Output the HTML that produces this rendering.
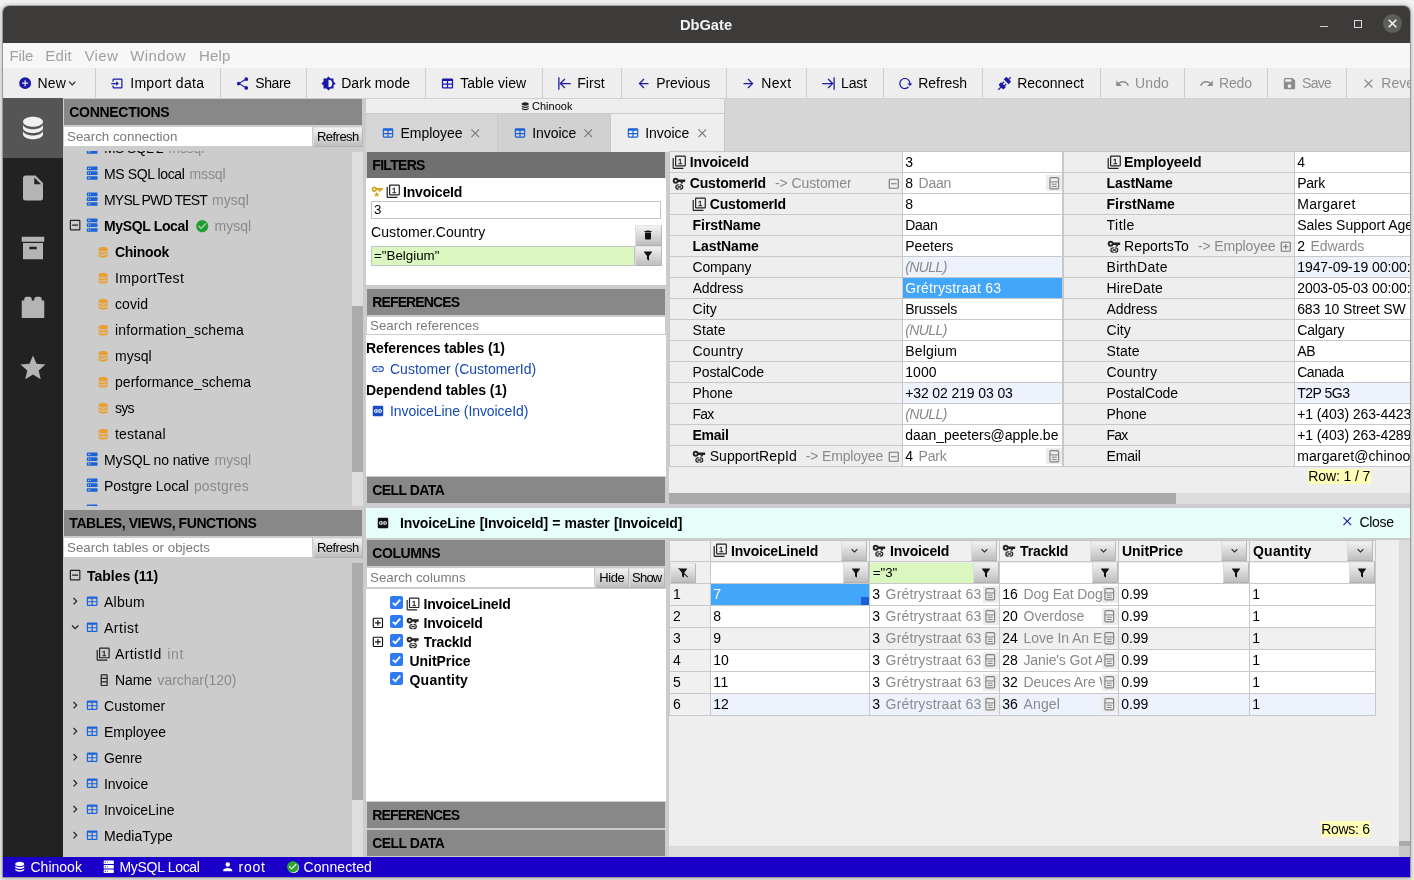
<!DOCTYPE html><html><head><meta charset="utf-8"><title>DbGate</title><style>
html,body{margin:0;padding:0}
body{width:1414px;height:880px;overflow:hidden;background:#f1f1f1;font-family:"Liberation Sans",sans-serif;font-size:14px;color:#000;position:relative}
#sh{position:absolute;left:3px;top:6px;width:1407px;height:871px;border-radius:6px 6px 0 0;box-shadow:0 0 0 1px rgba(0,0,0,.22),0 1px 5px 1px rgba(0,0,0,.3)}
#win{position:absolute;left:0;top:0;width:1414px;height:880px;clip-path:inset(6px 4px 3px 3px round 6px 6px 0 0);background:#eee;will-change:transform}
#win div,#win svg.i{position:absolute;box-sizing:border-box}
svg.i{fill:currentColor}
.t{white-space:pre;overflow:hidden}
.wt{background:#888;padding-left:5.3px;white-space:pre}
.btn{background:linear-gradient(#f2f2f2,#bebebe);border:1px solid;border-color:#e4e4e4 #b8b8b8 #b2b2b2 #dcdcdc;text-align:center;white-space:pre}
.inp{background:#fff;border:1px solid transparent;background-clip:border-box;font-size:13.33px;color:#000;white-space:pre;overflow:hidden}
.ph{color:#7a7a7a}
.clip{overflow:hidden}
.cell{white-space:pre;overflow:hidden;padding-left:2.2px}
</style></head><body>
<div id="sh"></div><div id="win">
<div style="left:0px;top:0px;width:1414px;height:43px;background:#3c3b39"></div>
<div class="t" style="left:606px;top:11.2px;height:28px;line-height:28px;width:200px;text-align:center;color:#f4f4f4"><span style="letter-spacing:-0.003px;font-size:14.67px;font-weight:bold;">DbGate</span></div>
<div style="left:1320px;top:26px;width:8px;height:1px;background:#d0d0d0"></div>
<div style="left:1354px;top:20px;width:8px;height:8px;border:1px solid #d8d8d8"></div>
<div style="left:1382.6px;top:14.3px;width:19px;height:19px;background:#5f5e5c;border-radius:50%"></div>
<svg class="i" style="left:1382.6px;top:14.3px;width:19px;height:19px" viewBox="0 0 19 19"><path d="M5.7 5.7L13.3 13.3M13.3 5.7L5.7 13.3" stroke="#fff" stroke-width="1.4" fill="none"/></svg>
<div style="left:0px;top:43px;width:1414px;height:25px;background:#f7f7f7"></div>
<div class="t" style="left:9.4px;top:44px;height:24px;line-height:24px;color:#a0a0a0"><span style="letter-spacing:-0.105px;font-size:15px;">File</span></div>
<div class="t" style="left:45.3px;top:44px;height:24px;line-height:24px;color:#a0a0a0"><span style="letter-spacing:0.188px;font-size:15px;">Edit</span></div>
<div class="t" style="left:84.5px;top:44px;height:24px;line-height:24px;color:#a0a0a0"><span style="letter-spacing:0.332px;font-size:15px;">View</span></div>
<div class="t" style="left:130.3px;top:44px;height:24px;line-height:24px;color:#a0a0a0"><span style="letter-spacing:0.367px;font-size:15px;">Window</span></div>
<div class="t" style="left:199px;top:44px;height:24px;line-height:24px;color:#a0a0a0"><span style="letter-spacing:0.148px;font-size:15px;">Help</span></div>
<div style="left:0px;top:68px;width:1414px;height:30px;background:#eee"></div>
<div style="left:0px;top:98px;width:1414px;height:1px;background:#d0d0d0"></div>
<svg class="i" viewBox="0 0 24 24" style="left:18px;top:76px;width:14.3px;height:14.3px;color:#1a1aa6;"><path d="M17,13H13V17H11V13H7V11H11V7H13V11H17M12,2A10,10 0 0,0 2,12A10,10 0 0,0 12,22A10,10 0 0,0 22,12A10,10 0 0,0 12,2Z"/></svg>
<div class="t" style="left:37.4px;top:70px;height:27px;line-height:27px;"><span style="letter-spacing:0.193px;">New</span></div>
<svg class="i" viewBox="0 0 24 24" style="left:65.3px;top:75.8px;width:14.5px;height:14.5px;color:#222;"><path d="M7.41,8.58L12,13.17L16.59,8.58L18,10L12,16L6,10L7.41,8.58Z"/></svg>
<div style="left:95px;top:68px;width:1px;height:30px;background:#ccc"></div>
<svg class="i" viewBox="0 0 24 24" style="left:110.3px;top:75.6px;width:15px;height:15px;color:#1a1aa6;"><path d="M14,12L10,8V11H2V13H10V16M20,18V6C20,4.89 19.1,4 18,4H6A2,2 0 0,0 4,6V9H6V6H18V18H6V15H4V18A2,2 0 0,0 6,20H18A2,2 0 0,0 20,18Z"/></svg>
<div class="t" style="left:130.2px;top:70px;height:27px;line-height:27px;"><span style="letter-spacing:0.3px;">Import data</span></div>
<div style="left:220px;top:68px;width:1px;height:30px;background:#ccc"></div>
<svg class="i" viewBox="0 0 24 24" style="left:235.3px;top:75.6px;width:15px;height:15px;color:#1a1aa6;"><path d="M18,16.08C17.24,16.08 16.56,16.38 16.04,16.85L8.91,12.7C8.96,12.47 9,12.24 9,12C9,11.76 8.96,11.53 8.91,11.3L15.96,7.19C16.5,7.69 17.21,8 18,8A3,3 0 0,0 21,5A3,3 0 0,0 18,2A3,3 0 0,0 15,5C15,5.24 15.04,5.47 15.09,5.7L8.04,9.81C7.5,9.31 6.79,9 6,9A3,3 0 0,0 3,12A3,3 0 0,0 6,15C6.79,15 7.5,14.69 8.04,14.19L15.16,18.34C15.11,18.55 15.08,18.77 15.08,19C15.08,20.61 16.39,21.91 18,21.91C19.61,21.91 20.92,20.61 20.92,19A2.92,2.92 0 0,0 18,16.08Z"/></svg>
<div class="t" style="left:255.2px;top:70px;height:27px;line-height:27px;"><span style="letter-spacing:-0.362px;">Share</span></div>
<div style="left:306px;top:68px;width:1px;height:30px;background:#ccc"></div>
<svg class="i" viewBox="0 0 24 24" style="left:321.3px;top:75.6px;width:15px;height:15px;color:#1a1aa6;"><path d="M12,18V6A6,6 0 0,1 18,12A6,6 0 0,1 12,18M20,15.31L23.31,12L20,8.69V4H15.31L12,0.69L8.69,4H4V8.69L0.69,12L4,15.31V20H8.69L12,23.31L15.31,20H20V15.31Z"/></svg>
<div class="t" style="left:341.2px;top:70px;height:27px;line-height:27px;"><span style="letter-spacing:0.043px;">Dark mode</span></div>
<div style="left:425px;top:68px;width:1px;height:30px;background:#ccc"></div>
<svg class="i" viewBox="0 0 24 24" style="left:440.3px;top:75.6px;width:15px;height:15px;color:#1a1aa6;"><path d="M5,4H19A2,2 0 0,1 21,6V18A2,2 0 0,1 19,20H5A2,2 0 0,1 3,18V6A2,2 0 0,1 5,4M5,8V12H11V8H5M13,8V12H19V8H13M5,14V18H11V14H5M13,14V18H19V14H13Z"/></svg>
<div class="t" style="left:460.2px;top:70px;height:27px;line-height:27px;"><span style="letter-spacing:0.069px;">Table view</span></div>
<div style="left:542px;top:68px;width:1px;height:30px;background:#ccc"></div>
<svg class="i" viewBox="0 0 24 24" style="left:557.3px;top:75.6px;width:15px;height:15px;color:#1a1aa6;"><path d="M11.92,19.92L4,12L11.92,4.08L13.33,5.5L7.83,11H22V13H7.83L13.34,18.5L11.92,19.92M4,12V2H2V22H4V12Z"/></svg>
<div class="t" style="left:577.2px;top:70px;height:27px;line-height:27px;"><span style="letter-spacing:0.087px;">First</span></div>
<div style="left:621px;top:68px;width:1px;height:30px;background:#ccc"></div>
<svg class="i" viewBox="0 0 24 24" style="left:636.3px;top:75.6px;width:15px;height:15px;color:#1a1aa6;"><path d="M20,11V13H8L13.5,18.5L12.08,19.92L4.16,12L12.08,4.08L13.5,5.5L8,11H20Z"/></svg>
<div class="t" style="left:656.2px;top:70px;height:27px;line-height:27px;"><span style="letter-spacing:-0.072px;">Previous</span></div>
<div style="left:726px;top:68px;width:1px;height:30px;background:#ccc"></div>
<svg class="i" viewBox="0 0 24 24" style="left:741.3px;top:75.6px;width:15px;height:15px;color:#1a1aa6;"><path d="M4,11V13H16L10.5,18.5L11.92,19.92L19.84,12L11.92,4.08L10.5,5.5L16,11H4Z"/></svg>
<div class="t" style="left:761.2px;top:70px;height:27px;line-height:27px;"><span style="letter-spacing:0.375px;">Next</span></div>
<div style="left:806px;top:68px;width:1px;height:30px;background:#ccc"></div>
<svg class="i" viewBox="0 0 24 24" style="left:821.1px;top:75.6px;width:15px;height:15px;color:#1a1aa6;"><path d="M12.08,4.08L20,12L12.08,19.92L10.67,18.5L16.17,13H2V11H16.17L10.67,5.5L12.08,4.08M20,12V22H22V2H20V12Z"/></svg>
<div class="t" style="left:841.0px;top:70px;height:27px;line-height:27px;"><span style="letter-spacing:-0.137px;">Last</span></div>
<div style="left:883px;top:68px;width:1px;height:30px;background:#ccc"></div>
<svg class="i" viewBox="0 0 24 24" style="left:898.3px;top:75.6px;width:15px;height:15px;color:#1a1aa6;"><path d="M2 12C2 16.97 6.03 21 11 21C13.39 21 15.68 20.06 17.4 18.4L15.9 16.9C14.63 18.25 12.86 19 11 19C4.76 19 1.64 11.46 6.05 7.05C10.46 2.64 18 5.77 18 12H15L19 16H19.1L23 12H20C20 7.03 15.97 3 11 3C6.03 3 2 7.03 2 12Z"/></svg>
<div class="t" style="left:918.2px;top:70px;height:27px;line-height:27px;"><span style="letter-spacing:-0.025px;">Refresh</span></div>
<div style="left:982px;top:68px;width:1px;height:30px;background:#ccc"></div>
<svg class="i" viewBox="0 0 24 24" style="left:997.3px;top:75.6px;width:15px;height:15px;color:#1a1aa6;"><path d="M21.4 7.5C22.2 8.3 22.2 9.6 21.4 10.3L18.6 13.1L10.8 5.3L13.6 2.5C14.4 1.7 15.7 1.7 16.4 2.5L18.2 4.3L21.2 1.3L22.6 2.7L19.6 5.7L21.4 7.5M15.6 13.3L14.2 11.9L11.4 14.7L9.3 12.6L12.1 9.8L10.7 8.4L7.9 11.2L6.4 9.8L3.6 12.6C2.8 13.4 2.8 14.7 3.6 15.4L5.4 17.2L1.4 21.2L2.8 22.6L6.8 18.6L8.6 20.4C9.4 21.2 10.7 21.2 11.4 20.4L14.2 17.6L12.8 16.2L15.6 13.3Z"/></svg>
<div class="t" style="left:1017.2px;top:70px;height:27px;line-height:27px;"><span style="letter-spacing:-0.014px;">Reconnect</span></div>
<div style="left:1100px;top:68px;width:1px;height:30px;background:#ccc"></div>
<svg class="i" viewBox="0 0 24 24" style="left:1115.1px;top:75.6px;width:15px;height:15px;color:#8c8c8c;"><path d="M12.5,8C9.85,8 7.45,9 5.6,10.6L2,7V16H11L7.38,12.38C8.77,11.22 10.54,10.5 12.5,10.5C16.04,10.5 19.05,12.81 20.1,16L22.47,15.22C21.08,11.03 17.15,8 12.5,8Z"/></svg>
<div class="t" style="left:1135.0px;top:70px;height:27px;line-height:27px;color:#8f8f8f"><span style="letter-spacing:0.117px;">Undo</span></div>
<div style="left:1184px;top:68px;width:1px;height:30px;background:#ccc"></div>
<svg class="i" viewBox="0 0 24 24" style="left:1199.1px;top:75.6px;width:15px;height:15px;color:#8c8c8c;"><path d="M18.4,10.6C16.55,9 14.15,8 11.5,8C6.85,8 2.92,11.03 1.54,15.22L3.9,16C4.95,12.81 7.95,10.5 11.5,10.5C13.45,10.5 15.23,11.22 16.62,12.38L13,16H22V7L18.4,10.6Z"/></svg>
<div class="t" style="left:1219.0px;top:70px;height:27px;line-height:27px;color:#8f8f8f"><span style="letter-spacing:-0.164px;">Redo</span></div>
<div style="left:1267px;top:68px;width:1px;height:30px;background:#ccc"></div>
<svg class="i" viewBox="0 0 24 24" style="left:1282.1px;top:75.6px;width:15px;height:15px;color:#8c8c8c;"><path d="M15,9H5V5H15M12,19A3,3 0 0,1 9,16A3,3 0 0,1 12,13A3,3 0 0,1 15,16A3,3 0 0,1 12,19M17,3H5C3.89,3 3,3.9 3,5V19A2,2 0 0,0 5,21H19A2,2 0 0,0 21,19V7L17,3Z"/></svg>
<div class="t" style="left:1302.0px;top:70px;height:27px;line-height:27px;color:#8f8f8f"><span style="letter-spacing:-0.711px;">Save</span></div>
<div style="left:1346px;top:68px;width:1px;height:30px;background:#ccc"></div>
<svg class="i" viewBox="0 0 24 24" style="left:1361.3px;top:75.6px;width:15px;height:15px;color:#8c8c8c;"><path d="M19,6.41L17.59,5L12,10.59L6.41,5L5,6.41L10.59,12L5,17.59L6.41,19L12,13.41L17.59,19L19,17.59L13.41,12L19,6.41Z"/></svg>
<div class="t" style="left:1381.2px;top:70px;height:27px;line-height:27px;color:#8f8f8f"><span style="letter-spacing:0.089px;">Revert</span></div>
<div style="left:0px;top:98px;width:63px;height:761px;background:#222"></div>
<div style="left:0px;top:98px;width:63px;height:60px;background:#555"></div>
<svg class="i" viewBox="0 0 24 24" style="left:18px;top:113px;width:30px;height:30px;color:#f0f0f0;"><path d="M12,3C7.58,3 4,4.79 4,7C4,9.21 7.58,11 12,11C16.42,11 20,9.21 20,7C20,4.79 16.42,3 12,3M4,9V12C4,14.21 7.58,16 12,16C16.42,16 20,14.21 20,12V9C20,11.21 16.42,13 12,13C7.58,13 4,11.21 4,9M4,14V17C4,19.21 7.58,21 12,21C16.42,21 20,19.21 20,17V14C20,16.21 16.42,18 12,18C7.58,18 4,16.21 4,14Z"/></svg>
<svg class="i" viewBox="0 0 24 24" style="left:18px;top:173px;width:30px;height:30px;color:#b4b4b4;"><path d="M13,9V3.5L18.5,9M6,2C4.89,2 4,2.89 4,4V20A2,2 0 0,0 6,22H18A2,2 0 0,0 20,20V8L14,2H6Z"/></svg>
<svg class="i" viewBox="0 0 24 24" style="left:18px;top:233px;width:30px;height:30px;color:#b4b4b4;"><path d="M3,3H21V7H3V3M4,8H20V21H4V8M9.5,11A0.5,0.5 0 0,0 9,11.5V13H15V11.5A0.5,0.5 0 0,0 14.5,11H9.5Z"/></svg>
<svg class="i" viewBox="0 0 24 24" style="left:18px;top:293px;width:30px;height:30px;color:#b4b4b4;"><path d="M19,6V5A2,2 0 0,0 17,3H15A2,2 0 0,0 13,5V6H11V5A2,2 0 0,0 9,3H7A2,2 0 0,0 5,5V6H3V20H21V6H19Z"/></svg>
<svg class="i" viewBox="0 0 24 24" style="left:18px;top:353px;width:30px;height:30px;color:#b4b4b4;"><path d="M12,17.27L18.18,21L16.54,13.97L22,9.24L14.81,8.62L12,2L9.19,8.62L2,9.24L7.45,13.97L5.82,21L12,17.27Z"/></svg>
<div style="left:63px;top:98px;width:303px;height:761px;background:#ccc"></div>
<div class="wt" style="left:64px;top:99px;width:298px;height:26px;line-height:26px;background:#888"><span style="letter-spacing:-0.305px;font-weight:bold;">CONNECTIONS</span></div>
<div class="inp ph" style="left:64px;top:127px;width:248px;height:19px;line-height:17px;background:#fff;border-color:transparent;padding-left:2px">Search connection</div>
<div class="btn" style="left:313px;top:126.7px;width:49.7px;height:20px;line-height:17px"><span style="letter-spacing:-0.522px;font-size:13px;">Refresh</span></div>
<div class="clip" style="left:63px;top:150.5px;width:289px;height:355.5px"><div style="left:0;top:-2.5px;width:289px;height:360px">
<svg class="i" viewBox="0 0 24 24" style="left:22.2px;top:-7.7px;width:14.3px;height:14.3px;color:#1a63d6;"><path d="M4,1H20A1,1 0 0,1 21,2V6A1,1 0 0,1 20,7H4A1,1 0 0,1 3,6V2A1,1 0 0,1 4,1M4,9H20A1,1 0 0,1 21,10V14A1,1 0 0,1 20,15H4A1,1 0 0,1 3,14V10A1,1 0 0,1 4,9M4,17H20A1,1 0 0,1 21,18V22A1,1 0 0,1 20,23H4A1,1 0 0,1 3,22V18A1,1 0 0,1 4,17M9,5H10V3H9V5M9,13H10V11H9V13M9,21H10V19H9V21M5,3V5H7V3H5M5,11V13H7V11H5M5,19V21H7V19H5Z"/></svg><div class="t" style="left:41px;top:-13px;height:26px;line-height:26px;"><span style="letter-spacing:-0.615px;">MS SQL 2</span><span style="display:inline-block;width:5px"></span><span style="letter-spacing:-0.094px;color:#8a8a8a;">mssql</span></div>
<svg class="i" viewBox="0 0 24 24" style="left:22.2px;top:18.3px;width:14.3px;height:14.3px;color:#1a63d6;"><path d="M4,1H20A1,1 0 0,1 21,2V6A1,1 0 0,1 20,7H4A1,1 0 0,1 3,6V2A1,1 0 0,1 4,1M4,9H20A1,1 0 0,1 21,10V14A1,1 0 0,1 20,15H4A1,1 0 0,1 3,14V10A1,1 0 0,1 4,9M4,17H20A1,1 0 0,1 21,18V22A1,1 0 0,1 20,23H4A1,1 0 0,1 3,22V18A1,1 0 0,1 4,17M9,5H10V3H9V5M9,13H10V11H9V13M9,21H10V19H9V21M5,3V5H7V3H5M5,11V13H7V11H5M5,19V21H7V19H5Z"/></svg><div class="t" style="left:41px;top:13px;height:26px;line-height:26px;"><span style="letter-spacing:-0.387px;">MS SQL local</span><span style="display:inline-block;width:5px"></span><span style="letter-spacing:-0.094px;color:#8a8a8a;">mssql</span></div>
<svg class="i" viewBox="0 0 24 24" style="left:22.2px;top:44.3px;width:14.3px;height:14.3px;color:#1a63d6;"><path d="M4,1H20A1,1 0 0,1 21,2V6A1,1 0 0,1 20,7H4A1,1 0 0,1 3,6V2A1,1 0 0,1 4,1M4,9H20A1,1 0 0,1 21,10V14A1,1 0 0,1 20,15H4A1,1 0 0,1 3,14V10A1,1 0 0,1 4,9M4,17H20A1,1 0 0,1 21,18V22A1,1 0 0,1 20,23H4A1,1 0 0,1 3,22V18A1,1 0 0,1 4,17M9,5H10V3H9V5M9,13H10V11H9V13M9,21H10V19H9V21M5,3V5H7V3H5M5,11V13H7V11H5M5,19V21H7V19H5Z"/></svg><div class="t" style="left:41px;top:39px;height:26px;line-height:26px;"><span style="letter-spacing:-0.809px;">MYSL PWD TEST</span><span style="display:inline-block;width:5px"></span><span style="letter-spacing:0.041px;color:#8a8a8a;">mysql</span></div>
<svg class="i" viewBox="0 0 24 24" style="left:4.8px;top:70.2px;width:14.2px;height:14.2px;color:#222;"><path d="M19,19V5H5V19H19M19,3A2,2 0 0,1 21,5V19A2,2 0 0,1 19,21H5A2,2 0 0,1 3,19V5C3,3.89 3.9,3 5,3H19M17,11V13H7V11H17Z"/></svg><svg class="i" viewBox="0 0 24 24" style="left:22.2px;top:70.3px;width:14.3px;height:14.3px;color:#1a63d6;"><path d="M4,1H20A1,1 0 0,1 21,2V6A1,1 0 0,1 20,7H4A1,1 0 0,1 3,6V2A1,1 0 0,1 4,1M4,9H20A1,1 0 0,1 21,10V14A1,1 0 0,1 20,15H4A1,1 0 0,1 3,14V10A1,1 0 0,1 4,9M4,17H20A1,1 0 0,1 21,18V22A1,1 0 0,1 20,23H4A1,1 0 0,1 3,22V18A1,1 0 0,1 4,17M9,5H10V3H9V5M9,13H10V11H9V13M9,21H10V19H9V21M5,3V5H7V3H5M5,11V13H7V11H5M5,19V21H7V19H5Z"/></svg><div class="t" style="left:41px;top:65px;height:26px;line-height:26px;"><span style="letter-spacing:-0.361px;font-weight:bold;">MySQL Local</span><svg style="position:static;display:inline-block;vertical-align:-2.5px;width:14.5px;height:14.5px;color:#1e9e2e;fill:currentColor;margin:0 5px 0 6.5px" viewBox="0 0 24 24"><path d="M12 2C6.5 2 2 6.5 2 12S6.5 22 12 22 22 17.5 22 12 17.5 2 12 2M10 17L5 12L6.41 10.59L10 14.17L17.59 6.58L19 8L10 17Z"/></svg><span style="letter-spacing:0.041px;color:#8a8a8a;">mysql</span></div>
<svg class="i" viewBox="0 0 24 24" style="left:32.5px;top:96.5px;width:14.3px;height:14.3px;color:#e8a035;"><path d="M12,3C7.58,3 4,4.79 4,7C4,9.21 7.58,11 12,11C16.42,11 20,9.21 20,7C20,4.79 16.42,3 12,3M4,9V12C4,14.21 7.58,16 12,16C16.42,16 20,14.21 20,12V9C20,11.21 16.42,13 12,13C7.58,13 4,11.21 4,9M4,14V17C4,19.21 7.58,21 12,21C16.42,21 20,19.21 20,17V14C20,16.21 16.42,18 12,18C7.58,18 4,16.21 4,14Z"/></svg><div class="t" style="left:52px;top:91px;height:26px;line-height:26px;"><span style="letter-spacing:-0.295px;font-weight:bold;">Chinook</span></div>
<svg class="i" viewBox="0 0 24 24" style="left:32.5px;top:122.5px;width:14.3px;height:14.3px;color:#e8a035;"><path d="M12,3C7.58,3 4,4.79 4,7C4,9.21 7.58,11 12,11C16.42,11 20,9.21 20,7C20,4.79 16.42,3 12,3M4,9V12C4,14.21 7.58,16 12,16C16.42,16 20,14.21 20,12V9C20,11.21 16.42,13 12,13C7.58,13 4,11.21 4,9M4,14V17C4,19.21 7.58,21 12,21C16.42,21 20,19.21 20,17V14C20,16.21 16.42,18 12,18C7.58,18 4,16.21 4,14Z"/></svg><div class="t" style="left:52px;top:117px;height:26px;line-height:26px;"><span style="letter-spacing:0.392px;">ImportTest</span></div>
<svg class="i" viewBox="0 0 24 24" style="left:32.5px;top:148.5px;width:14.3px;height:14.3px;color:#e8a035;"><path d="M12,3C7.58,3 4,4.79 4,7C4,9.21 7.58,11 12,11C16.42,11 20,9.21 20,7C20,4.79 16.42,3 12,3M4,9V12C4,14.21 7.58,16 12,16C16.42,16 20,14.21 20,12V9C20,11.21 16.42,13 12,13C7.58,13 4,11.21 4,9M4,14V17C4,19.21 7.58,21 12,21C16.42,21 20,19.21 20,17V14C20,16.21 16.42,18 12,18C7.58,18 4,16.21 4,14Z"/></svg><div class="t" style="left:52px;top:143px;height:26px;line-height:26px;"><span style="letter-spacing:0.075px;">covid</span></div>
<svg class="i" viewBox="0 0 24 24" style="left:32.5px;top:174.5px;width:14.3px;height:14.3px;color:#e8a035;"><path d="M12,3C7.58,3 4,4.79 4,7C4,9.21 7.58,11 12,11C16.42,11 20,9.21 20,7C20,4.79 16.42,3 12,3M4,9V12C4,14.21 7.58,16 12,16C16.42,16 20,14.21 20,12V9C20,11.21 16.42,13 12,13C7.58,13 4,11.21 4,9M4,14V17C4,19.21 7.58,21 12,21C16.42,21 20,19.21 20,17V14C20,16.21 16.42,18 12,18C7.58,18 4,16.21 4,14Z"/></svg><div class="t" style="left:52px;top:169px;height:26px;line-height:26px;"><span style="letter-spacing:0.166px;">information_schema</span></div>
<svg class="i" viewBox="0 0 24 24" style="left:32.5px;top:200.5px;width:14.3px;height:14.3px;color:#e8a035;"><path d="M12,3C7.58,3 4,4.79 4,7C4,9.21 7.58,11 12,11C16.42,11 20,9.21 20,7C20,4.79 16.42,3 12,3M4,9V12C4,14.21 7.58,16 12,16C16.42,16 20,14.21 20,12V9C20,11.21 16.42,13 12,13C7.58,13 4,11.21 4,9M4,14V17C4,19.21 7.58,21 12,21C16.42,21 20,19.21 20,17V14C20,16.21 16.42,18 12,18C7.58,18 4,16.21 4,14Z"/></svg><div class="t" style="left:52px;top:195px;height:26px;line-height:26px;"><span style="letter-spacing:0.041px;">mysql</span></div>
<svg class="i" viewBox="0 0 24 24" style="left:32.5px;top:226.5px;width:14.3px;height:14.3px;color:#e8a035;"><path d="M12,3C7.58,3 4,4.79 4,7C4,9.21 7.58,11 12,11C16.42,11 20,9.21 20,7C20,4.79 16.42,3 12,3M4,9V12C4,14.21 7.58,16 12,16C16.42,16 20,14.21 20,12V9C20,11.21 16.42,13 12,13C7.58,13 4,11.21 4,9M4,14V17C4,19.21 7.58,21 12,21C16.42,21 20,19.21 20,17V14C20,16.21 16.42,18 12,18C7.58,18 4,16.21 4,14Z"/></svg><div class="t" style="left:52px;top:221px;height:26px;line-height:26px;"><span style="letter-spacing:0.031px;">performance_schema</span></div>
<svg class="i" viewBox="0 0 24 24" style="left:32.5px;top:252.5px;width:14.3px;height:14.3px;color:#e8a035;"><path d="M12,3C7.58,3 4,4.79 4,7C4,9.21 7.58,11 12,11C16.42,11 20,9.21 20,7C20,4.79 16.42,3 12,3M4,9V12C4,14.21 7.58,16 12,16C16.42,16 20,14.21 20,12V9C20,11.21 16.42,13 12,13C7.58,13 4,11.21 4,9M4,14V17C4,19.21 7.58,21 12,21C16.42,21 20,19.21 20,17V14C20,16.21 16.42,18 12,18C7.58,18 4,16.21 4,14Z"/></svg><div class="t" style="left:52px;top:247px;height:26px;line-height:26px;"><span style="letter-spacing:-0.698px;">sys</span></div>
<svg class="i" viewBox="0 0 24 24" style="left:32.5px;top:278.5px;width:14.3px;height:14.3px;color:#e8a035;"><path d="M12,3C7.58,3 4,4.79 4,7C4,9.21 7.58,11 12,11C16.42,11 20,9.21 20,7C20,4.79 16.42,3 12,3M4,9V12C4,14.21 7.58,16 12,16C16.42,16 20,14.21 20,12V9C20,11.21 16.42,13 12,13C7.58,13 4,11.21 4,9M4,14V17C4,19.21 7.58,21 12,21C16.42,21 20,19.21 20,17V14C20,16.21 16.42,18 12,18C7.58,18 4,16.21 4,14Z"/></svg><div class="t" style="left:52px;top:273px;height:26px;line-height:26px;"><span style="letter-spacing:0.221px;">testanal</span></div>
<svg class="i" viewBox="0 0 24 24" style="left:22.2px;top:304.3px;width:14.3px;height:14.3px;color:#1a63d6;"><path d="M4,1H20A1,1 0 0,1 21,2V6A1,1 0 0,1 20,7H4A1,1 0 0,1 3,6V2A1,1 0 0,1 4,1M4,9H20A1,1 0 0,1 21,10V14A1,1 0 0,1 20,15H4A1,1 0 0,1 3,14V10A1,1 0 0,1 4,9M4,17H20A1,1 0 0,1 21,18V22A1,1 0 0,1 20,23H4A1,1 0 0,1 3,22V18A1,1 0 0,1 4,17M9,5H10V3H9V5M9,13H10V11H9V13M9,21H10V19H9V21M5,3V5H7V3H5M5,11V13H7V11H5M5,19V21H7V19H5Z"/></svg><div class="t" style="left:41px;top:299px;height:26px;line-height:26px;"><span style="letter-spacing:-0.096px;">MySQL no native</span><span style="display:inline-block;width:5px"></span><span style="letter-spacing:0.041px;color:#8a8a8a;">mysql</span></div>
<svg class="i" viewBox="0 0 24 24" style="left:22.2px;top:330.3px;width:14.3px;height:14.3px;color:#1a63d6;"><path d="M4,1H20A1,1 0 0,1 21,2V6A1,1 0 0,1 20,7H4A1,1 0 0,1 3,6V2A1,1 0 0,1 4,1M4,9H20A1,1 0 0,1 21,10V14A1,1 0 0,1 20,15H4A1,1 0 0,1 3,14V10A1,1 0 0,1 4,9M4,17H20A1,1 0 0,1 21,18V22A1,1 0 0,1 20,23H4A1,1 0 0,1 3,22V18A1,1 0 0,1 4,17M9,5H10V3H9V5M9,13H10V11H9V13M9,21H10V19H9V21M5,3V5H7V3H5M5,11V13H7V11H5M5,19V21H7V19H5Z"/></svg><div class="t" style="left:41px;top:325px;height:26px;line-height:26px;"><span style="letter-spacing:-0.055px;">Postgre Local</span><span style="display:inline-block;width:5px"></span><span style="letter-spacing:0.172px;color:#8a8a8a;">postgres</span></div>
<svg class="i" viewBox="0 0 24 24" style="left:22.2px;top:356.3px;width:14.3px;height:14.3px;color:#1a63d6;"><path d="M4,1H20A1,1 0 0,1 21,2V6A1,1 0 0,1 20,7H4A1,1 0 0,1 3,6V2A1,1 0 0,1 4,1M4,9H20A1,1 0 0,1 21,10V14A1,1 0 0,1 20,15H4A1,1 0 0,1 3,14V10A1,1 0 0,1 4,9M4,17H20A1,1 0 0,1 21,18V22A1,1 0 0,1 20,23H4A1,1 0 0,1 3,22V18A1,1 0 0,1 4,17M9,5H10V3H9V5M9,13H10V11H9V13M9,21H10V19H9V21M5,3V5H7V3H5M5,11V13H7V11H5M5,19V21H7V19H5Z"/></svg><div class="t" style="left:41px;top:351px;height:26px;line-height:26px;"><span style="letter-spacing:0.074px;">Postgre no native</span><span style="display:inline-block;width:5px"></span><span style="letter-spacing:0.172px;color:#8a8a8a;">postgres</span></div>
</div></div>
<div style="left:352px;top:152px;width:11px;height:354px;background:#dedede"></div>
<div style="left:352px;top:306px;width:11px;height:166px;background:#ababab"></div>
<div class="wt" style="left:64px;top:510px;width:298px;height:26px;line-height:26px;background:#888"><span style="letter-spacing:-0.423px;font-weight:bold;">TABLES, VIEWS, FUNCTIONS</span></div>
<div class="inp ph" style="left:64px;top:538px;width:248px;height:19px;line-height:17px;background:#fff;border-color:transparent;padding-left:2px">Search tables or objects</div>
<div class="btn" style="left:313px;top:537.7px;width:49.7px;height:20px;line-height:17px"><span style="letter-spacing:-0.522px;font-size:13px;">Refresh</span></div>
<div class="clip" style="left:63px;top:560px;width:289px;height:296.3px">
<svg class="i" viewBox="0 0 24 24" style="left:4.8px;top:8.2px;width:14.2px;height:14.2px;color:#222;"><path d="M19,19V5H5V19H19M19,3A2,2 0 0,1 21,5V19A2,2 0 0,1 19,21H5A2,2 0 0,1 3,19V5C3,3.89 3.9,3 5,3H19M17,11V13H7V11H17Z"/></svg><div class="t" style="left:24px;top:3px;height:26px;line-height:26px;"><span style="letter-spacing:-0.013px;font-weight:bold;">Tables (11)</span></div>
<svg class="i" viewBox="0 0 24 24" style="left:4.8px;top:34.2px;width:14.3px;height:14.3px;color:#222;"><path d="M8.59,16.58L13.17,12L8.59,7.41L10,6L16,12L10,18L8.59,16.58Z"/></svg><svg class="i" viewBox="0 0 24 24" style="left:21.8px;top:34.2px;width:14.3px;height:14.3px;color:#1a63d6;"><path d="M5,4H19A2,2 0 0,1 21,6V18A2,2 0 0,1 19,20H5A2,2 0 0,1 3,18V6A2,2 0 0,1 5,4M5,8V12H11V8H5M13,8V12H19V8H13M5,14V18H11V14H5M13,14V18H19V14H13Z"/></svg><div class="t" style="left:41px;top:29px;height:26px;line-height:26px;"><span style="letter-spacing:0.272px;">Album</span></div>
<svg class="i" viewBox="0 0 24 24" style="left:4.8px;top:60.2px;width:14.3px;height:14.3px;color:#222;"><path d="M7.41,8.58L12,13.17L16.59,8.58L18,10L12,16L6,10L7.41,8.58Z"/></svg><svg class="i" viewBox="0 0 24 24" style="left:21.8px;top:60.2px;width:14.3px;height:14.3px;color:#1a63d6;"><path d="M5,4H19A2,2 0 0,1 21,6V18A2,2 0 0,1 19,20H5A2,2 0 0,1 3,18V6A2,2 0 0,1 5,4M5,8V12H11V8H5M13,8V12H19V8H13M5,14V18H11V14H5M13,14V18H19V14H13Z"/></svg><div class="t" style="left:41px;top:55px;height:26px;line-height:26px;"><span style="letter-spacing:0.5px;">Artist</span></div>
<svg class="i" viewBox="0 0 24 24" style="left:33.3px;top:86.7px;width:14.3px;height:14.3px;color:#222;"><path d="M3,5V21H19V23H3A2,2 0 0,1 1,21V5H3M21,17V3H7V17H21M21,1A2,2 0 0,1 23,3V17A2,2 0 0,1 21,19H7A2,2 0 0,1 5,17V3C5,1.89 5.9,1 7,1H21Z"/><text x="13.7" y="15" font-size="13" text-anchor="middle" stroke="currentColor" stroke-width=".5">1</text></svg><div class="t" style="left:52px;top:81px;height:26px;line-height:26px;"><span style="letter-spacing:0.387px;">ArtistId</span><span style="letter-spacing:0.703px;color:#8a8a8a;margin-left:5.5px;">int</span></div>
<svg class="i" viewBox="0 0 24 24" style="left:33.5px;top:112.7px;width:14.3px;height:14.3px;color:#222;"><path d="M8,2H16A2,2 0 0,1 18,4V20A2,2 0 0,1 16,22H8A2,2 0 0,1 6,20V4A2,2 0 0,1 8,2M8,10V14H16V10H8M8,16V20H16V16H8M8,4V8H16V4H8Z"/></svg><div class="t" style="left:52px;top:107px;height:26px;line-height:26px;"><span style="letter-spacing:-0.086px;">Name</span><span style="letter-spacing:-0.046px;color:#8a8a8a;margin-left:5.5px;">varchar(120)</span></div>
<svg class="i" viewBox="0 0 24 24" style="left:4.8px;top:138.2px;width:14.3px;height:14.3px;color:#222;"><path d="M8.59,16.58L13.17,12L8.59,7.41L10,6L16,12L10,18L8.59,16.58Z"/></svg><svg class="i" viewBox="0 0 24 24" style="left:21.8px;top:138.2px;width:14.3px;height:14.3px;color:#1a63d6;"><path d="M5,4H19A2,2 0 0,1 21,6V18A2,2 0 0,1 19,20H5A2,2 0 0,1 3,18V6A2,2 0 0,1 5,4M5,8V12H11V8H5M13,8V12H19V8H13M5,14V18H11V14H5M13,14V18H19V14H13Z"/></svg><div class="t" style="left:41px;top:133px;height:26px;line-height:26px;"><span style="letter-spacing:0.078px;">Customer</span></div>
<svg class="i" viewBox="0 0 24 24" style="left:4.8px;top:164.2px;width:14.3px;height:14.3px;color:#222;"><path d="M8.59,16.58L13.17,12L8.59,7.41L10,6L16,12L10,18L8.59,16.58Z"/></svg><svg class="i" viewBox="0 0 24 24" style="left:21.8px;top:164.2px;width:14.3px;height:14.3px;color:#1a63d6;"><path d="M5,4H19A2,2 0 0,1 21,6V18A2,2 0 0,1 19,20H5A2,2 0 0,1 3,18V6A2,2 0 0,1 5,4M5,8V12H11V8H5M13,8V12H19V8H13M5,14V18H11V14H5M13,14V18H19V14H13Z"/></svg><div class="t" style="left:41px;top:159px;height:26px;line-height:26px;"><span style="letter-spacing:-0.016px;">Employee</span></div>
<svg class="i" viewBox="0 0 24 24" style="left:4.8px;top:190.2px;width:14.3px;height:14.3px;color:#222;"><path d="M8.59,16.58L13.17,12L8.59,7.41L10,6L16,12L10,18L8.59,16.58Z"/></svg><svg class="i" viewBox="0 0 24 24" style="left:21.8px;top:190.2px;width:14.3px;height:14.3px;color:#1a63d6;"><path d="M5,4H19A2,2 0 0,1 21,6V18A2,2 0 0,1 19,20H5A2,2 0 0,1 3,18V6A2,2 0 0,1 5,4M5,8V12H11V8H5M13,8V12H19V8H13M5,14V18H11V14H5M13,14V18H19V14H13Z"/></svg><div class="t" style="left:41px;top:185px;height:26px;line-height:26px;"><span style="letter-spacing:-0.178px;">Genre</span></div>
<svg class="i" viewBox="0 0 24 24" style="left:4.8px;top:216.2px;width:14.3px;height:14.3px;color:#222;"><path d="M8.59,16.58L13.17,12L8.59,7.41L10,6L16,12L10,18L8.59,16.58Z"/></svg><svg class="i" viewBox="0 0 24 24" style="left:21.8px;top:216.2px;width:14.3px;height:14.3px;color:#1a63d6;"><path d="M5,4H19A2,2 0 0,1 21,6V18A2,2 0 0,1 19,20H5A2,2 0 0,1 3,18V6A2,2 0 0,1 5,4M5,8V12H11V8H5M13,8V12H19V8H13M5,14V18H11V14H5M13,14V18H19V14H13Z"/></svg><div class="t" style="left:41px;top:211px;height:26px;line-height:26px;"><span style="letter-spacing:-0.029px;">Invoice</span></div>
<svg class="i" viewBox="0 0 24 24" style="left:4.8px;top:242.2px;width:14.3px;height:14.3px;color:#222;"><path d="M8.59,16.58L13.17,12L8.59,7.41L10,6L16,12L10,18L8.59,16.58Z"/></svg><svg class="i" viewBox="0 0 24 24" style="left:21.8px;top:242.2px;width:14.3px;height:14.3px;color:#1a63d6;"><path d="M5,4H19A2,2 0 0,1 21,6V18A2,2 0 0,1 19,20H5A2,2 0 0,1 3,18V6A2,2 0 0,1 5,4M5,8V12H11V8H5M13,8V12H19V8H13M5,14V18H11V14H5M13,14V18H19V14H13Z"/></svg><div class="t" style="left:41px;top:237px;height:26px;line-height:26px;"><span style="letter-spacing:-0.038px;">InvoiceLine</span></div>
<svg class="i" viewBox="0 0 24 24" style="left:4.8px;top:268.2px;width:14.3px;height:14.3px;color:#222;"><path d="M8.59,16.58L13.17,12L8.59,7.41L10,6L16,12L10,18L8.59,16.58Z"/></svg><svg class="i" viewBox="0 0 24 24" style="left:21.8px;top:268.2px;width:14.3px;height:14.3px;color:#1a63d6;"><path d="M5,4H19A2,2 0 0,1 21,6V18A2,2 0 0,1 19,20H5A2,2 0 0,1 3,18V6A2,2 0 0,1 5,4M5,8V12H11V8H5M13,8V12H19V8H13M5,14V18H11V14H5M13,14V18H19V14H13Z"/></svg><div class="t" style="left:41px;top:263px;height:26px;line-height:26px;"><span style="letter-spacing:0.045px;">MediaType</span></div>
<svg class="i" viewBox="0 0 24 24" style="left:4.8px;top:294.2px;width:14.3px;height:14.3px;color:#222;"><path d="M8.59,16.58L13.17,12L8.59,7.41L10,6L16,12L10,18L8.59,16.58Z"/></svg><svg class="i" viewBox="0 0 24 24" style="left:21.8px;top:294.2px;width:14.3px;height:14.3px;color:#1a63d6;"><path d="M5,4H19A2,2 0 0,1 21,6V18A2,2 0 0,1 19,20H5A2,2 0 0,1 3,18V6A2,2 0 0,1 5,4M5,8V12H11V8H5M13,8V12H19V8H13M5,14V18H11V14H5M13,14V18H19V14H13Z"/></svg><div class="t" style="left:41px;top:289px;height:26px;line-height:26px;"><span style="letter-spacing:0.037px;">Playlist</span></div>
</div>
<div style="left:352px;top:563px;width:11px;height:294px;background:#dedede"></div>
<div style="left:352px;top:563px;width:11px;height:237px;background:#ababab"></div>
<div style="left:366px;top:99px;width:1048px;height:760px;background:#eee"></div>
<div style="left:366px;top:98.5px;width:1048px;height:53.5px;background:#d6d6d6"></div>
<div style="left:366px;top:98.5px;width:359.2px;height:15px;background:#eee;border:1px solid #ccc;border-left:0;border-top:0"></div>
<svg class="i" viewBox="0 0 24 24" style="left:519.5px;top:101px;width:10.5px;height:10.5px;color:#222;"><path d="M12,3C7.58,3 4,4.79 4,7C4,9.21 7.58,11 12,11C16.42,11 20,9.21 20,7C20,4.79 16.42,3 12,3M4,9V12C4,14.21 7.58,16 12,16C16.42,16 20,14.21 20,12V9C20,11.21 16.42,13 12,13C7.58,13 4,11.21 4,9M4,14V17C4,19.21 7.58,21 12,21C16.42,21 20,19.21 20,17V14C20,16.21 16.42,18 12,18C7.58,18 4,16.21 4,14Z"/></svg>
<div class="t" style="left:532px;top:97.8px;height:14px;line-height:14px;"><span style="letter-spacing:0.007px;font-size:11px;">Chinook</span></div>
<div style="left:366px;top:113.5px;width:131.7px;height:38.5px;background:#d6d6d6;border-right:1px solid #c8c8c8"></div>
<svg class="i" viewBox="0 0 24 24" style="left:380.8px;top:125.5px;width:14px;height:14px;color:#1a63d6;"><path d="M5,4H19A2,2 0 0,1 21,6V18A2,2 0 0,1 19,20H5A2,2 0 0,1 3,18V6A2,2 0 0,1 5,4M5,8V12H11V8H5M13,8V12H19V8H13M5,14V18H11V14H5M13,14V18H19V14H13Z"/></svg>
<div class="t" style="left:400.5px;top:120px;height:27px;line-height:27px;"><span style="letter-spacing:-0.016px;">Employee</span></div>
<svg class="i" viewBox="0 0 24 24" style="left:467.5px;top:126px;width:14.5px;height:14.5px;color:#7a7a7a;"><path d="M19,6.41L17.59,5L12,10.59L6.41,5L5,6.41L10.59,12L5,17.59L6.41,19L12,13.41L17.59,19L19,17.59L13.41,12L19,6.41Z"/></svg>
<div style="left:497.7px;top:113.5px;width:113px;height:38.5px;background:#d1d1d1;border-right:1px solid #c8c8c8"></div>
<svg class="i" viewBox="0 0 24 24" style="left:512.5px;top:125.5px;width:14px;height:14px;color:#1a63d6;"><path d="M5,4H19A2,2 0 0,1 21,6V18A2,2 0 0,1 19,20H5A2,2 0 0,1 3,18V6A2,2 0 0,1 5,4M5,8V12H11V8H5M13,8V12H19V8H13M5,14V18H11V14H5M13,14V18H19V14H13Z"/></svg>
<div class="t" style="left:532.2px;top:120px;height:27px;line-height:27px;"><span style="letter-spacing:-0.029px;">Invoice</span></div>
<svg class="i" viewBox="0 0 24 24" style="left:580.5px;top:126px;width:14.5px;height:14.5px;color:#7a7a7a;"><path d="M19,6.41L17.59,5L12,10.59L6.41,5L5,6.41L10.59,12L5,17.59L6.41,19L12,13.41L17.59,19L19,17.59L13.41,12L19,6.41Z"/></svg>
<div style="left:610.7px;top:113.5px;width:114.5px;height:38.5px;background:#eee;border-right:1px solid #c8c8c8"></div>
<svg class="i" viewBox="0 0 24 24" style="left:625.5px;top:125.5px;width:14px;height:14px;color:#1a63d6;"><path d="M5,4H19A2,2 0 0,1 21,6V18A2,2 0 0,1 19,20H5A2,2 0 0,1 3,18V6A2,2 0 0,1 5,4M5,8V12H11V8H5M13,8V12H19V8H13M5,14V18H11V14H5M13,14V18H19V14H13Z"/></svg>
<div class="t" style="left:645.2px;top:120px;height:27px;line-height:27px;"><span style="letter-spacing:-0.029px;">Invoice</span></div>
<svg class="i" viewBox="0 0 24 24" style="left:695.0px;top:126px;width:14.5px;height:14.5px;color:#7a7a7a;"><path d="M19,6.41L17.59,5L12,10.59L6.41,5L5,6.41L10.59,12L5,17.59L6.41,19L12,13.41L17.59,19L19,17.59L13.41,12L19,6.41Z"/></svg>
<div style="left:366px;top:152px;width:300px;height:352px;background:#ccc"></div>
<div class="wt" style="left:367px;top:152px;width:298px;height:26px;line-height:26px;background:#707070"><span style="letter-spacing:-0.688px;font-weight:bold;">FILTERS</span></div>
<div style="left:366px;top:178px;width:300px;height:107px;background:#fff"></div>
<svg class="i" viewBox="0 0 24 24" style="left:371px;top:185px;width:13px;height:13px;color:#d6a520;"><path d="M6.2,2.8A5,5 0 0,1 10.9,5.7H21.8V9.9H17.9V12.6H14.4V9.9H10.9A5,5 0 0,1 6.2,12.8A5,5 0 0,1 1.2,7.8A5,5 0 0,1 6.2,2.8M6.2,6A1.8,1.8 0 0,0 4.4,7.8A1.8,1.8 0 0,0 6.2,9.6A1.8,1.8 0 0,0 8,7.8A1.8,1.8 0 0,0 6.2,6Z"/><path d="M10.5,12.6L12,16L15.7,16.3L12.9,18.7L13.8,22.3L10.5,20.4L7.2,22.3L8.1,18.7L5.3,16.3L9,16L10.5,12.6Z"/></svg>
<svg class="i" viewBox="0 0 24 24" style="left:385.5px;top:184px;width:14.5px;height:14.5px;color:#222;"><path d="M3,5V21H19V23H3A2,2 0 0,1 1,21V5H3M21,17V3H7V17H21M21,1A2,2 0 0,1 23,3V17A2,2 0 0,1 21,19H7A2,2 0 0,1 5,17V3C5,1.89 5.9,1 7,1H21Z"/><text x="13.7" y="15" font-size="13" text-anchor="middle" stroke="currentColor" stroke-width=".5">1</text></svg>
<div class="t" style="left:403px;top:182.5px;height:18px;line-height:18px;"><span style="letter-spacing:-0.17px;font-weight:bold;">InvoiceId</span></div>
<div class="inp" style="left:371px;top:200.5px;width:290px;height:18.5px;line-height:16.5px;background:#fff;border-color:#c4c4c4;padding-left:2px">3</div>
<div class="t" style="left:371px;top:223px;height:18px;line-height:18px;"><span style="letter-spacing:0.1px;">Customer.Country</span></div>
<div class="btn" style="left:635px;top:224.5px;width:26.5px;height:21.5px;line-height:18.5px"></div>
<svg class="i" viewBox="0 0 24 24" style="left:642px;top:229px;width:12px;height:12px;color:#111;"><path d="M19,4H15.5L14.5,3H9.5L8.5,4H5V6H19M6,19A2,2 0 0,0 8,21H16A2,2 0 0,0 18,19V7H6V19Z"/></svg>
<div class="inp" style="left:371px;top:246px;width:264px;height:19.5px;line-height:17.5px;background:#d9f7be;border-color:#c4c4c4;padding-left:2px">=&quot;Belgium&quot;</div>
<div class="btn" style="left:635px;top:246px;width:26.5px;height:19.5px;line-height:16.5px"></div>
<svg class="i" viewBox="0 0 24 24" style="left:642px;top:249.5px;width:12px;height:12px;color:#111;"><path d="M14,12V19.88C14.04,20.18 13.94,20.5 13.71,20.71C13.32,21.1 12.69,21.1 12.3,20.71L10.29,18.7C10.06,18.47 9.96,18.16 10,17.87V12H9.97L4.21,4.62C3.87,4.19 3.95,3.56 4.38,3.22C4.57,3.08 4.78,3 5,3V3H19V3C19.22,3 19.43,3.08 19.62,3.22C20.05,3.56 20.13,4.19 19.79,4.62L14.03,12H14Z"/></svg>
<div class="wt" style="left:367px;top:289px;width:298px;height:26px;line-height:26px;background:#888"><span style="letter-spacing:-0.878px;font-weight:bold;">REFERENCES</span></div>
<div style="left:366px;top:335.3px;width:300px;height:140.7px;background:#fff"></div>
<div class="inp ph" style="left:367px;top:317px;width:298px;height:17.3px;line-height:15.3px;background:#fff;border-color:transparent;padding-left:2px">Search references</div>
<div class="t" style="left:366px;top:338px;height:20px;line-height:20px;"><span style="letter-spacing:-0.095px;font-weight:bold;">References tables (1)</span></div>
<svg class="i" viewBox="0 0 24 24" style="left:370.5px;top:361.5px;width:14px;height:14px;color:#1a50c4;"><path d="M3.9,12C3.9,10.29 5.29,8.9 7,8.9H11V7H7A5,5 0 0,0 2,12A5,5 0 0,0 7,17H11V15.1H7C5.29,15.1 3.9,13.71 3.9,12M8,13H16V11H8V13M17,7H13V8.9H17C18.71,8.9 20.1,10.29 20.1,12C20.1,13.71 18.71,15.1 17,15.1H13V17H17A5,5 0 0,0 22,12A5,5 0 0,0 17,7Z"/></svg>
<div class="t" style="left:390px;top:359px;height:21px;line-height:21px;color:#1749b2"><span style="letter-spacing:-0.005px;">Customer (CustomerId)</span></div>
<div class="t" style="left:366px;top:380px;height:20px;line-height:20px;"><span style="letter-spacing:-0.036px;font-weight:bold;">Dependend tables (1)</span></div>
<svg class="i" viewBox="0 0 24 24" style="left:370.5px;top:403.5px;width:14px;height:14px;color:#1a4cc4;"><path d="M19,3A2,2 0 0,1 21,5V19A2,2 0 0,1 19,21H5A2,2 0 0,1 3,19V5A2,2 0 0,1 5,3H19M8,9.2A2.8,2.8 0 0,0 5.2,12A2.8,2.8 0 0,0 8,14.8H11V13.4H8A1.4,1.4 0 0,1 6.6,12A1.4,1.4 0 0,1 8,10.6H11V9.2H8M9,11.3V12.7H15V11.3H9M13,9.2V10.6H16A1.4,1.4 0 0,1 17.4,12A1.4,1.4 0 0,1 16,13.4H13V14.8H16A2.8,2.8 0 0,0 18.8,12A2.8,2.8 0 0,0 16,9.2H13Z"/></svg>
<div class="t" style="left:390px;top:401px;height:21px;line-height:21px;color:#1749b2"><span style="letter-spacing:-0.075px;">InvoiceLine (InvoiceId)</span></div>
<div class="wt" style="left:367px;top:477px;width:298px;height:26px;line-height:26px;background:#888"><span style="letter-spacing:-0.568px;font-weight:bold;">CELL DATA</span></div>
<div style="left:666px;top:152px;width:3px;height:352px;background:#ccc"></div>
<div style="left:669px;top:152px;width:745px;height:352px;background:#eee"></div>
<div style="left:669px;top:151px;width:745px;height:1px;background:#c8c8c8"></div>
<div style="left:669px;top:172px;width:745px;height:1px;background:#c8c8c8"></div>
<svg class="i" viewBox="0 0 24 24" style="left:672.2px;top:154.6px;width:14.5px;height:14.5px;color:#222;"><path d="M3,5V21H19V23H3A2,2 0 0,1 1,21V5H3M21,17V3H7V17H21M21,1A2,2 0 0,1 23,3V17A2,2 0 0,1 21,19H7A2,2 0 0,1 5,17V3C5,1.89 5.9,1 7,1H21Z"/><text x="13.7" y="15" font-size="13" text-anchor="middle" stroke="currentColor" stroke-width=".5">1</text></svg>
<div class="t" style="left:689.7px;top:152px;height:20px;line-height:20px;"><span style="letter-spacing:-0.17px;font-weight:bold;">InvoiceId</span></div>
<div class="cell" style="left:903px;top:152px;width:159px;height:20px;line-height:20px;background:#fff;color:#000"><span style="letter-spacing:0.109px;">3</span></div>
<div style="left:669px;top:193px;width:745px;height:1px;background:#c8c8c8"></div>
<svg class="i" viewBox="0 0 24 24" style="left:672.2px;top:175.6px;width:14.5px;height:14.5px;color:#222;"><path d="M6.2,2.8A5,5 0 0,1 10.9,5.7H21.8V9.9H17.9V12.6H14.4V9.9H10.9A5,5 0 0,1 6.2,12.8A5,5 0 0,1 1.2,7.8A5,5 0 0,1 6.2,2.8M6.2,6A1.8,1.8 0 0,0 4.4,7.8A1.8,1.8 0 0,0 6.2,9.6A1.8,1.8 0 0,0 8,7.8A1.8,1.8 0 0,0 6.2,6Z"/><path d="M11.2,14.7H9.9A3.5,3.5 0 0,0 9.9,21.7H11.2M12.8,14.7H14.1A3.5,3.5 0 0,1 14.1,21.7H12.8M9.2,18.2H14.8" fill="none" stroke="currentColor" stroke-width="2.1"/></svg>
<div class="t" style="left:689.7px;top:173px;height:20px;line-height:20px;"><span style="letter-spacing:-0.148px;font-weight:bold;">CustomerId</span><span style="letter-spacing:-0.087px;color:#8a8a8a;margin-left:9px;">-&gt; Customer</span></div>
<svg class="i" viewBox="0 0 24 24" style="left:887px;top:176.5px;width:13.5px;height:13.5px;color:#777;"><path d="M19,19V5H5V19H19M19,3A2,2 0 0,1 21,5V19A2,2 0 0,1 19,21H5A2,2 0 0,1 3,19V5C3,3.89 3.9,3 5,3H19M17,11V13H7V11H17Z"/></svg>
<div class="cell" style="left:903px;top:173px;width:159px;height:20px;line-height:20px;background:#fff;color:#000"><span style="letter-spacing:0.109px;">8</span><span style="letter-spacing:-0.297px;color:#8a8a8a;margin-left:5.5px;">Daan</span></div>
<div style="left:1046px;top:175px;width:16px;height:16px;background:#ececec"></div>
<svg class="i" viewBox="0 0 24 24" style="left:1046.5px;top:175.7px;width:14.5px;height:14.5px;color:#808080;"><rect x="4.8" y="2.8" width="14.4" height="18.4" rx="1.6" fill="none" stroke="currentColor" stroke-width="1.9"/><path d="M4.8 9.8H19.2M8 13.6H16M8 17.4H16" fill="none" stroke="currentColor" stroke-width="1.6"/></svg>
<div style="left:669px;top:214px;width:745px;height:1px;background:#c8c8c8"></div>
<svg class="i" viewBox="0 0 24 24" style="left:692.2px;top:196.6px;width:14.5px;height:14.5px;color:#222;"><path d="M3,5V21H19V23H3A2,2 0 0,1 1,21V5H3M21,17V3H7V17H21M21,1A2,2 0 0,1 23,3V17A2,2 0 0,1 21,19H7A2,2 0 0,1 5,17V3C5,1.89 5.9,1 7,1H21Z"/><text x="13.7" y="15" font-size="13" text-anchor="middle" stroke="currentColor" stroke-width=".5">1</text></svg>
<div class="t" style="left:709.7px;top:194px;height:20px;line-height:20px;"><span style="letter-spacing:-0.148px;font-weight:bold;">CustomerId</span></div>
<div class="cell" style="left:903px;top:194px;width:159px;height:20px;line-height:20px;background:#fff;color:#000"><span style="letter-spacing:0.109px;">8</span></div>
<div style="left:669px;top:235px;width:745px;height:1px;background:#c8c8c8"></div>
<div class="t" style="left:692.5px;top:215px;height:20px;line-height:20px;"><span style="letter-spacing:-0.014px;font-weight:bold;">FirstName</span></div>
<div class="cell" style="left:903px;top:215px;width:159px;height:20px;line-height:20px;background:#fff;color:#000"><span style="letter-spacing:-0.297px;">Daan</span></div>
<div style="left:669px;top:256px;width:745px;height:1px;background:#c8c8c8"></div>
<div class="t" style="left:692.5px;top:236px;height:20px;line-height:20px;"><span style="letter-spacing:-0.082px;font-weight:bold;">LastName</span></div>
<div class="cell" style="left:903px;top:236px;width:159px;height:20px;line-height:20px;background:#fff;color:#000"><span style="letter-spacing:-0.016px;">Peeters</span></div>
<div style="left:669px;top:277px;width:745px;height:1px;background:#c8c8c8"></div>
<div class="t" style="left:692.5px;top:257px;height:20px;line-height:20px;"><span style="letter-spacing:-0.152px;">Company</span></div>
<div class="cell" style="left:903px;top:257px;width:159px;height:20px;line-height:20px;background:#edf2fd;color:#000"><span style="letter-spacing:-0.581px;font-style:italic;color:#888;">(NULL)</span></div>
<div style="left:669px;top:298px;width:745px;height:1px;background:#c8c8c8"></div>
<div class="t" style="left:692.5px;top:278px;height:20px;line-height:20px;"><span style="letter-spacing:-0.103px;">Address</span></div>
<div class="cell" style="left:903px;top:278px;width:159px;height:20px;line-height:20px;background:#42a6fa;color:#fff"><span style="letter-spacing:0.171px;">Grétrystraat 63</span></div>
<div style="left:669px;top:319px;width:745px;height:1px;background:#c8c8c8"></div>
<div class="t" style="left:692.5px;top:299px;height:20px;line-height:20px;"><span style="letter-spacing:0.031px;">City</span></div>
<div class="cell" style="left:903px;top:299px;width:159px;height:20px;line-height:20px;background:#fff;color:#000"><span style="letter-spacing:-0.232px;">Brussels</span></div>
<div style="left:669px;top:340px;width:745px;height:1px;background:#c8c8c8"></div>
<div class="t" style="left:692.5px;top:320px;height:20px;line-height:20px;"><span style="letter-spacing:0.103px;">State</span></div>
<div class="cell" style="left:903px;top:320px;width:159px;height:20px;line-height:20px;background:#fff;color:#000"><span style="letter-spacing:-0.581px;font-style:italic;color:#888;">(NULL)</span></div>
<div style="left:669px;top:361px;width:745px;height:1px;background:#c8c8c8"></div>
<div class="t" style="left:692.5px;top:341px;height:20px;line-height:20px;"><span style="letter-spacing:0.228px;">Country</span></div>
<div class="cell" style="left:903px;top:341px;width:159px;height:20px;line-height:20px;background:#fff;color:#000"><span style="letter-spacing:0.176px;">Belgium</span></div>
<div style="left:669px;top:382px;width:745px;height:1px;background:#c8c8c8"></div>
<div class="t" style="left:692.5px;top:362px;height:20px;line-height:20px;"><span style="letter-spacing:-0.089px;">PostalCode</span></div>
<div class="cell" style="left:903px;top:362px;width:159px;height:20px;line-height:20px;background:#fff;color:#000"><span style="letter-spacing:0.109px;">1000</span></div>
<div style="left:669px;top:403px;width:745px;height:1px;background:#c8c8c8"></div>
<div class="t" style="left:692.5px;top:383px;height:20px;line-height:20px;"><span style="letter-spacing:-0.041px;">Phone</span></div>
<div class="cell" style="left:903px;top:383px;width:159px;height:20px;line-height:20px;background:#edf2fd;color:#000"><span style="letter-spacing:-0.113px;">+32 02 219 03 03</span></div>
<div style="left:669px;top:424px;width:745px;height:1px;background:#c8c8c8"></div>
<div class="t" style="left:692.5px;top:404px;height:20px;line-height:20px;"><span style="letter-spacing:-0.745px;">Fax</span></div>
<div class="cell" style="left:903px;top:404px;width:159px;height:20px;line-height:20px;background:#fff;color:#000"><span style="letter-spacing:-0.581px;font-style:italic;color:#888;">(NULL)</span></div>
<div style="left:669px;top:445px;width:745px;height:1px;background:#c8c8c8"></div>
<div class="t" style="left:692.5px;top:425px;height:20px;line-height:20px;"><span style="letter-spacing:-0.244px;font-weight:bold;">Email</span></div>
<div class="cell" style="left:903px;top:425px;width:159px;height:20px;line-height:20px;background:#fff;color:#000"><span style="letter-spacing:-0.016px;">daan_peeters@apple.be</span></div>
<div style="left:669px;top:466px;width:745px;height:1px;background:#c8c8c8"></div>
<svg class="i" viewBox="0 0 24 24" style="left:692.2px;top:448.6px;width:14.5px;height:14.5px;color:#222;"><path d="M6.2,2.8A5,5 0 0,1 10.9,5.7H21.8V9.9H17.9V12.6H14.4V9.9H10.9A5,5 0 0,1 6.2,12.8A5,5 0 0,1 1.2,7.8A5,5 0 0,1 6.2,2.8M6.2,6A1.8,1.8 0 0,0 4.4,7.8A1.8,1.8 0 0,0 6.2,9.6A1.8,1.8 0 0,0 8,7.8A1.8,1.8 0 0,0 6.2,6Z"/><path d="M11.2,14.7H9.9A3.5,3.5 0 0,0 9.9,21.7H11.2M12.8,14.7H14.1A3.5,3.5 0 0,1 14.1,21.7H12.8M9.2,18.2H14.8" fill="none" stroke="currentColor" stroke-width="2.1"/></svg>
<div class="t" style="left:709.7px;top:446px;height:20px;line-height:20px;"><span style="letter-spacing:0.057px;">SupportRepId</span><span style="letter-spacing:-0.155px;color:#8a8a8a;margin-left:9px;">-&gt; Employee</span></div>
<svg class="i" viewBox="0 0 24 24" style="left:887px;top:449.5px;width:13.5px;height:13.5px;color:#777;"><path d="M19,19V5H5V19H19M19,3A2,2 0 0,1 21,5V19A2,2 0 0,1 19,21H5A2,2 0 0,1 3,19V5C3,3.89 3.9,3 5,3H19M17,11V13H7V11H17Z"/></svg>
<div class="cell" style="left:903px;top:446px;width:159px;height:20px;line-height:20px;background:#fff;color:#000"><span style="letter-spacing:0.109px;">4</span><span style="letter-spacing:-0.242px;color:#8a8a8a;margin-left:5.5px;">Park</span></div>
<div style="left:1046px;top:448px;width:16px;height:16px;background:#ececec"></div>
<svg class="i" viewBox="0 0 24 24" style="left:1046.5px;top:448.7px;width:14.5px;height:14.5px;color:#808080;"><rect x="4.8" y="2.8" width="14.4" height="18.4" rx="1.6" fill="none" stroke="currentColor" stroke-width="1.9"/><path d="M4.8 9.8H19.2M8 13.6H16M8 17.4H16" fill="none" stroke="currentColor" stroke-width="1.6"/></svg>
<svg class="i" viewBox="0 0 24 24" style="left:1106.5px;top:154.6px;width:14.5px;height:14.5px;color:#222;"><path d="M3,5V21H19V23H3A2,2 0 0,1 1,21V5H3M21,17V3H7V17H21M21,1A2,2 0 0,1 23,3V17A2,2 0 0,1 21,19H7A2,2 0 0,1 5,17V3C5,1.89 5.9,1 7,1H21Z"/><text x="13.7" y="15" font-size="13" text-anchor="middle" stroke="currentColor" stroke-width=".5">1</text></svg>
<div class="t" style="left:1124.0px;top:152px;height:20px;line-height:20px;"><span style="letter-spacing:-0.128px;font-weight:bold;">EmployeeId</span></div>
<div class="cell" style="left:1295px;top:152px;width:125px;height:20px;line-height:20px;background:#fff;color:#000"><span style="letter-spacing:0.109px;">4</span></div>
<div class="t" style="left:1106.5px;top:173px;height:20px;line-height:20px;"><span style="letter-spacing:-0.082px;font-weight:bold;">LastName</span></div>
<div class="cell" style="left:1295px;top:173px;width:125px;height:20px;line-height:20px;background:#fff;color:#000"><span style="letter-spacing:-0.242px;">Park</span></div>
<div class="t" style="left:1106.5px;top:194px;height:20px;line-height:20px;"><span style="letter-spacing:-0.014px;font-weight:bold;">FirstName</span></div>
<div class="cell" style="left:1295px;top:194px;width:125px;height:20px;line-height:20px;background:#fff;color:#000"><span style="letter-spacing:0.299px;">Margaret</span></div>
<div class="t" style="left:1106.5px;top:215px;height:20px;line-height:20px;"><span style="letter-spacing:0.494px;">Title</span></div>
<div class="cell" style="left:1295px;top:215px;width:125px;height:20px;line-height:20px;background:#fff;color:#000"><span style="letter-spacing:-0.008px;">Sales Support Agent</span></div>
<svg class="i" viewBox="0 0 24 24" style="left:1106.5px;top:238.6px;width:14.5px;height:14.5px;color:#222;"><path d="M6.2,2.8A5,5 0 0,1 10.9,5.7H21.8V9.9H17.9V12.6H14.4V9.9H10.9A5,5 0 0,1 6.2,12.8A5,5 0 0,1 1.2,7.8A5,5 0 0,1 6.2,2.8M6.2,6A1.8,1.8 0 0,0 4.4,7.8A1.8,1.8 0 0,0 6.2,9.6A1.8,1.8 0 0,0 8,7.8A1.8,1.8 0 0,0 6.2,6Z"/><path d="M11.2,14.7H9.9A3.5,3.5 0 0,0 9.9,21.7H11.2M12.8,14.7H14.1A3.5,3.5 0 0,1 14.1,21.7H12.8M9.2,18.2H14.8" fill="none" stroke="currentColor" stroke-width="2.1"/></svg>
<div class="t" style="left:1124.0px;top:236px;height:20px;line-height:20px;"><span style="letter-spacing:0.132px;">ReportsTo</span><span style="letter-spacing:-0.155px;color:#8a8a8a;margin-left:9px;">-&gt; Employee</span></div>
<svg class="i" viewBox="0 0 24 24" style="left:1279px;top:239.5px;width:13.5px;height:13.5px;color:#777;"><path d="M19,19V5H5V19H19M19,3A2,2 0 0,1 21,5V19A2,2 0 0,1 19,21H5A2,2 0 0,1 3,19V5C3,3.89 3.9,3 5,3H19M11,7H13V11H17V13H13V17H11V13H7V11H11V7Z"/></svg>
<div class="cell" style="left:1295px;top:236px;width:125px;height:20px;line-height:20px;background:#fff;color:#000"><span style="letter-spacing:0.109px;">2</span><span style="letter-spacing:-0.134px;color:#8a8a8a;margin-left:5.5px;">Edwards</span></div>
<div class="t" style="left:1106.5px;top:257px;height:20px;line-height:20px;"><span style="letter-spacing:0.337px;">BirthDate</span></div>
<div class="cell" style="left:1295px;top:257px;width:125px;height:20px;line-height:20px;background:#edf2fd;color:#000"><span style="letter-spacing:-0.067px;">1947-09-19 00:00:00</span></div>
<div class="t" style="left:1106.5px;top:278px;height:20px;line-height:20px;"><span style="letter-spacing:0.152px;">HireDate</span></div>
<div class="cell" style="left:1295px;top:278px;width:125px;height:20px;line-height:20px;background:#fff;color:#000"><span style="letter-spacing:-0.067px;">2003-05-03 00:00:00</span></div>
<div class="t" style="left:1106.5px;top:299px;height:20px;line-height:20px;"><span style="letter-spacing:-0.103px;">Address</span></div>
<div class="cell" style="left:1295px;top:299px;width:125px;height:20px;line-height:20px;background:#fff;color:#000"><span style="letter-spacing:-0.129px;">683 10 Street SW</span></div>
<div class="t" style="left:1106.5px;top:320px;height:20px;line-height:20px;"><span style="letter-spacing:0.031px;">City</span></div>
<div class="cell" style="left:1295px;top:320px;width:125px;height:20px;line-height:20px;background:#fff;color:#000"><span style="letter-spacing:-0.167px;">Calgary</span></div>
<div class="t" style="left:1106.5px;top:341px;height:20px;line-height:20px;"><span style="letter-spacing:0.103px;">State</span></div>
<div class="cell" style="left:1295px;top:341px;width:125px;height:20px;line-height:20px;background:#fff;color:#000"><span style="letter-spacing:-0.344px;">AB</span></div>
<div class="t" style="left:1106.5px;top:362px;height:20px;line-height:20px;"><span style="letter-spacing:0.228px;">Country</span></div>
<div class="cell" style="left:1295px;top:362px;width:125px;height:20px;line-height:20px;background:#fff;color:#000"><span style="letter-spacing:-0.445px;">Canada</span></div>
<div class="t" style="left:1106.5px;top:383px;height:20px;line-height:20px;"><span style="letter-spacing:-0.089px;">PostalCode</span></div>
<div class="cell" style="left:1295px;top:383px;width:125px;height:20px;line-height:20px;background:#edf2fd;color:#000"><span style="letter-spacing:-0.491px;">T2P 5G3</span></div>
<div class="t" style="left:1106.5px;top:404px;height:20px;line-height:20px;"><span style="letter-spacing:-0.041px;">Phone</span></div>
<div class="cell" style="left:1295px;top:404px;width:125px;height:20px;line-height:20px;background:#fff;color:#000"><span style="letter-spacing:-0.092px;">+1 (403) 263-4423</span></div>
<div class="t" style="left:1106.5px;top:425px;height:20px;line-height:20px;"><span style="letter-spacing:-0.745px;">Fax</span></div>
<div class="cell" style="left:1295px;top:425px;width:125px;height:20px;line-height:20px;background:#fff;color:#000"><span style="letter-spacing:-0.092px;">+1 (403) 263-4289</span></div>
<div class="t" style="left:1106.5px;top:446px;height:20px;line-height:20px;"><span style="letter-spacing:-0.163px;">Email</span></div>
<div class="cell" style="left:1295px;top:446px;width:125px;height:20px;line-height:20px;background:#fff;color:#000"><span style="letter-spacing:0.119px;">margaret@chinookcorp.com</span></div>
<div style="left:669px;top:152px;width:1px;height:315px;background:#c8c8c8"></div>
<div style="left:902px;top:152px;width:1px;height:315px;background:#c8c8c8"></div>
<div style="left:1062px;top:152px;width:1.6px;height:315px;background:#c8c8c8"></div>
<div style="left:1294px;top:152px;width:1px;height:315px;background:#c8c8c8"></div>
<div class="t" style="left:1308px;top:469px;height:15px;line-height:15px;background:#ffffb8;width:62.5px;text-align:center;height:14.7px"><span style="letter-spacing:-0.125px;">Row: 1 / 7</span></div>
<div style="left:669px;top:493px;width:745px;height:11px;background:#dcdcdc"></div>
<div style="left:669px;top:493px;width:507px;height:11px;background:#aaa"></div>
<div style="left:366px;top:504px;width:1048px;height:4px;background:#ccc"></div>
<div style="left:366px;top:507.5px;width:1048px;height:30.5px;background:#e6fffb"></div>
<svg class="i" viewBox="0 0 24 24" style="left:376.4px;top:515.6px;width:14px;height:14px;color:#111;"><path d="M19,3A2,2 0 0,1 21,5V19A2,2 0 0,1 19,21H5A2,2 0 0,1 3,19V5A2,2 0 0,1 5,3H19M8,9.2A2.8,2.8 0 0,0 5.2,12A2.8,2.8 0 0,0 8,14.8H11V13.4H8A1.4,1.4 0 0,1 6.6,12A1.4,1.4 0 0,1 8,10.6H11V9.2H8M9,11.3V12.7H15V11.3H9M13,9.2V10.6H16A1.4,1.4 0 0,1 17.4,12A1.4,1.4 0 0,1 16,13.4H13V14.8H16A2.8,2.8 0 0,0 18.8,12A2.8,2.8 0 0,0 16,9.2H13Z"/></svg>
<div class="t" style="left:400px;top:512px;height:22px;line-height:22px;"><span style="letter-spacing:-0.156px;font-weight:bold;word-spacing:0.6px;">InvoiceLine [InvoiceId] = master [InvoiceId]</span></div>
<svg class="i" viewBox="0 0 24 24" style="left:1340px;top:514px;width:14.5px;height:14.5px;color:#1a1aa6;"><path d="M19,6.41L17.59,5L12,10.59L6.41,5L5,6.41L10.59,12L5,17.59L6.41,19L12,13.41L17.59,19L19,17.59L13.41,12L19,6.41Z"/></svg>
<div class="t" style="left:1359.5px;top:511px;height:22px;line-height:22px;"><span style="letter-spacing:-0.309px;">Close</span></div>
<div style="left:366px;top:538px;width:1048px;height:2px;background:#ccc"></div>
<div style="left:366px;top:540px;width:300px;height:319px;background:#ccc"></div>
<div class="wt" style="left:367px;top:540px;width:298px;height:26px;line-height:26px;background:#888"><span style="letter-spacing:-0.411px;font-weight:bold;">COLUMNS</span></div>
<div class="inp ph" style="left:367px;top:568px;width:227px;height:19px;line-height:17px;background:#fff;border-color:transparent;padding-left:2px">Search columns</div>
<div class="btn" style="left:595px;top:567.5px;width:33.5px;height:20.5px;line-height:17.5px"><span style="letter-spacing:-0.453px;font-size:13px;">Hide</span></div>
<div class="btn" style="left:628.5px;top:567.5px;width:36.5px;height:20.5px;line-height:17.5px"><span style="letter-spacing:-0.766px;font-size:13px;">Show</span></div>
<div style="left:366px;top:589px;width:300px;height:212px;background:#fff"></div>
<div style="left:390px;top:595.8px;width:13px;height:13px;background:#2d7af3;border-radius:2px"></div>
<svg class="i" style="left:390px;top:595.8px;width:13px;height:13px" viewBox="0 0 13 13"><path d="M2.8 6.8L5.3 9.2L10.2 3.6" stroke="#fff" stroke-width="1.8" fill="none"/></svg>
<svg class="i" viewBox="0 0 24 24" style="left:406px;top:596.5px;width:14px;height:14px;color:#222;"><path d="M3,5V21H19V23H3A2,2 0 0,1 1,21V5H3M21,17V3H7V17H21M21,1A2,2 0 0,1 23,3V17A2,2 0 0,1 21,19H7A2,2 0 0,1 5,17V3C5,1.89 5.9,1 7,1H21Z"/><text x="13.7" y="15" font-size="13" text-anchor="middle" stroke="currentColor" stroke-width=".5">1</text></svg>
<div class="t" style="left:423.5px;top:595px;height:19px;line-height:19px;"><span style="letter-spacing:-0.19px;font-weight:bold;">InvoiceLineId</span></div>
<svg class="i" viewBox="0 0 24 24" style="left:371.3px;top:615.8px;width:13.8px;height:13.8px;color:#111;"><path d="M19,19V5H5V19H19M19,3A2,2 0 0,1 21,5V19A2,2 0 0,1 19,21H5A2,2 0 0,1 3,19V5C3,3.89 3.9,3 5,3H19M11,7H13V11H17V13H13V17H11V13H7V11H11V7Z"/></svg>
<div style="left:390px;top:614.8px;width:13px;height:13px;background:#2d7af3;border-radius:2px"></div>
<svg class="i" style="left:390px;top:614.8px;width:13px;height:13px" viewBox="0 0 13 13"><path d="M2.8 6.8L5.3 9.2L10.2 3.6" stroke="#fff" stroke-width="1.8" fill="none"/></svg>
<svg class="i" viewBox="0 0 24 24" style="left:406px;top:615.5px;width:14px;height:14px;color:#222;"><path d="M6.2,2.8A5,5 0 0,1 10.9,5.7H21.8V9.9H17.9V12.6H14.4V9.9H10.9A5,5 0 0,1 6.2,12.8A5,5 0 0,1 1.2,7.8A5,5 0 0,1 6.2,2.8M6.2,6A1.8,1.8 0 0,0 4.4,7.8A1.8,1.8 0 0,0 6.2,9.6A1.8,1.8 0 0,0 8,7.8A1.8,1.8 0 0,0 6.2,6Z"/><path d="M11.2,14.7H9.9A3.5,3.5 0 0,0 9.9,21.7H11.2M12.8,14.7H14.1A3.5,3.5 0 0,1 14.1,21.7H12.8M9.2,18.2H14.8" fill="none" stroke="currentColor" stroke-width="2.1"/></svg>
<div class="t" style="left:423.5px;top:614px;height:19px;line-height:19px;"><span style="letter-spacing:-0.17px;font-weight:bold;">InvoiceId</span></div>
<svg class="i" viewBox="0 0 24 24" style="left:371.3px;top:634.8px;width:13.8px;height:13.8px;color:#111;"><path d="M19,19V5H5V19H19M19,3A2,2 0 0,1 21,5V19A2,2 0 0,1 19,21H5A2,2 0 0,1 3,19V5C3,3.89 3.9,3 5,3H19M11,7H13V11H17V13H13V17H11V13H7V11H11V7Z"/></svg>
<div style="left:390px;top:633.8px;width:13px;height:13px;background:#2d7af3;border-radius:2px"></div>
<svg class="i" style="left:390px;top:633.8px;width:13px;height:13px" viewBox="0 0 13 13"><path d="M2.8 6.8L5.3 9.2L10.2 3.6" stroke="#fff" stroke-width="1.8" fill="none"/></svg>
<svg class="i" viewBox="0 0 24 24" style="left:406px;top:634.5px;width:14px;height:14px;color:#222;"><path d="M6.2,2.8A5,5 0 0,1 10.9,5.7H21.8V9.9H17.9V12.6H14.4V9.9H10.9A5,5 0 0,1 6.2,12.8A5,5 0 0,1 1.2,7.8A5,5 0 0,1 6.2,2.8M6.2,6A1.8,1.8 0 0,0 4.4,7.8A1.8,1.8 0 0,0 6.2,9.6A1.8,1.8 0 0,0 8,7.8A1.8,1.8 0 0,0 6.2,6Z"/><path d="M11.2,14.7H9.9A3.5,3.5 0 0,0 9.9,21.7H11.2M12.8,14.7H14.1A3.5,3.5 0 0,1 14.1,21.7H12.8M9.2,18.2H14.8" fill="none" stroke="currentColor" stroke-width="2.1"/></svg>
<div class="t" style="left:423.5px;top:633px;height:19px;line-height:19px;"><span style="letter-spacing:-0.127px;font-weight:bold;">TrackId</span></div>
<div style="left:390px;top:652.8px;width:13px;height:13px;background:#2d7af3;border-radius:2px"></div>
<svg class="i" style="left:390px;top:652.8px;width:13px;height:13px" viewBox="0 0 13 13"><path d="M2.8 6.8L5.3 9.2L10.2 3.6" stroke="#fff" stroke-width="1.8" fill="none"/></svg>
<div class="t" style="left:409.5px;top:652px;height:19px;line-height:19px;"><span style="letter-spacing:-0.04px;font-weight:bold;">UnitPrice</span></div>
<div style="left:390px;top:671.8px;width:13px;height:13px;background:#2d7af3;border-radius:2px"></div>
<svg class="i" style="left:390px;top:671.8px;width:13px;height:13px" viewBox="0 0 13 13"><path d="M2.8 6.8L5.3 9.2L10.2 3.6" stroke="#fff" stroke-width="1.8" fill="none"/></svg>
<div class="t" style="left:409.5px;top:671px;height:19px;line-height:19px;"><span style="letter-spacing:0.217px;font-weight:bold;">Quantity</span></div>
<div class="wt" style="left:367px;top:802px;width:298px;height:26px;line-height:26px;background:#888"><span style="letter-spacing:-0.878px;font-weight:bold;">REFERENCES</span></div>
<div class="wt" style="left:367px;top:830px;width:298px;height:26px;line-height:26px;background:#888"><span style="letter-spacing:-0.568px;font-weight:bold;">CELL DATA</span></div>
<div style="left:666px;top:540px;width:3px;height:319px;background:#ccc"></div>
<div style="left:669px;top:540px;width:745px;height:319px;background:#eee"></div>
<div style="left:669px;top:539.5px;width:707px;height:1px;background:#c8c8c8"></div>
<div style="left:669px;top:561px;width:707px;height:1px;background:#c8c8c8"></div>
<div style="left:669px;top:583px;width:707px;height:1px;background:#c8c8c8"></div>
<div style="left:669px;top:605px;width:707px;height:1px;background:#c8c8c8"></div>
<div style="left:669px;top:627px;width:707px;height:1px;background:#c8c8c8"></div>
<div style="left:669px;top:649px;width:707px;height:1px;background:#c8c8c8"></div>
<div style="left:669px;top:671px;width:707px;height:1px;background:#c8c8c8"></div>
<div style="left:669px;top:693px;width:707px;height:1px;background:#c8c8c8"></div>
<div style="left:669px;top:715px;width:707px;height:1px;background:#c8c8c8"></div>
<div style="left:711px;top:540.5px;width:158px;height:20.5px;background:#f0f0f0"></div>
<svg class="i" viewBox="0 0 24 24" style="left:713px;top:543.4px;width:14.5px;height:14.5px;color:#222;"><path d="M3,5V21H19V23H3A2,2 0 0,1 1,21V5H3M21,17V3H7V17H21M21,1A2,2 0 0,1 23,3V17A2,2 0 0,1 21,19H7A2,2 0 0,1 5,17V3C5,1.89 5.9,1 7,1H21Z"/><text x="13.7" y="15" font-size="13" text-anchor="middle" stroke="currentColor" stroke-width=".5">1</text></svg>
<div class="t" style="left:731px;top:541px;height:20px;line-height:20px;"><span style="letter-spacing:-0.19px;font-weight:bold;">InvoiceLineId</span></div>
<div class="btn" style="left:841px;top:540.5px;width:25.5px;height:20.5px;line-height:17.5px"></div>
<svg class="i" viewBox="0 0 24 24" style="left:847.5px;top:543.8px;width:13px;height:13px;color:#222;"><path d="M7.41,8.58L12,13.17L16.59,8.58L18,10L12,16L6,10L7.41,8.58Z"/></svg>
<div class="inp" style="left:710.7px;top:562.7px;width:132.3px;height:20px;line-height:18px;background:#fff;border-color:transparent;padding-left:2px"></div>
<div class="btn" style="left:842.5px;top:562px;width:26.5px;height:21px;line-height:18px"></div>
<svg class="i" viewBox="0 0 24 24" style="left:849.5px;top:566.5px;width:12px;height:12px;color:#111;"><path d="M14,12V19.88C14.04,20.18 13.94,20.5 13.71,20.71C13.32,21.1 12.69,21.1 12.3,20.71L10.29,18.7C10.06,18.47 9.96,18.16 10,17.87V12H9.97L4.21,4.62C3.87,4.19 3.95,3.56 4.38,3.22C4.57,3.08 4.78,3 5,3V3H19V3C19.22,3 19.43,3.08 19.62,3.22C20.05,3.56 20.13,4.19 19.79,4.62L14.03,12H14Z"/></svg>
<div style="left:870px;top:540.5px;width:129px;height:20.5px;background:#f0f0f0"></div>
<svg class="i" viewBox="0 0 24 24" style="left:872px;top:543.4px;width:14.5px;height:14.5px;color:#222;"><path d="M6.2,2.8A5,5 0 0,1 10.9,5.7H21.8V9.9H17.9V12.6H14.4V9.9H10.9A5,5 0 0,1 6.2,12.8A5,5 0 0,1 1.2,7.8A5,5 0 0,1 6.2,2.8M6.2,6A1.8,1.8 0 0,0 4.4,7.8A1.8,1.8 0 0,0 6.2,9.6A1.8,1.8 0 0,0 8,7.8A1.8,1.8 0 0,0 6.2,6Z"/><path d="M11.2,14.7H9.9A3.5,3.5 0 0,0 9.9,21.7H11.2M12.8,14.7H14.1A3.5,3.5 0 0,1 14.1,21.7H12.8M9.2,18.2H14.8" fill="none" stroke="currentColor" stroke-width="2.1"/></svg>
<div class="t" style="left:890px;top:541px;height:20px;line-height:20px;"><span style="letter-spacing:-0.17px;font-weight:bold;">InvoiceId</span></div>
<div class="btn" style="left:971px;top:540.5px;width:25.5px;height:20.5px;line-height:17.5px"></div>
<svg class="i" viewBox="0 0 24 24" style="left:977.5px;top:543.8px;width:13px;height:13px;color:#222;"><path d="M7.41,8.58L12,13.17L16.59,8.58L18,10L12,16L6,10L7.41,8.58Z"/></svg>
<div class="inp" style="left:869.7px;top:562.7px;width:103.3px;height:20px;line-height:18px;background:#d9f7be;border-color:transparent;padding-left:2px">=&quot;3&quot;</div>
<div class="btn" style="left:972.5px;top:562px;width:26.5px;height:21px;line-height:18px"></div>
<svg class="i" viewBox="0 0 24 24" style="left:979.5px;top:566.5px;width:12px;height:12px;color:#111;"><path d="M14,12V19.88C14.04,20.18 13.94,20.5 13.71,20.71C13.32,21.1 12.69,21.1 12.3,20.71L10.29,18.7C10.06,18.47 9.96,18.16 10,17.87V12H9.97L4.21,4.62C3.87,4.19 3.95,3.56 4.38,3.22C4.57,3.08 4.78,3 5,3V3H19V3C19.22,3 19.43,3.08 19.62,3.22C20.05,3.56 20.13,4.19 19.79,4.62L14.03,12H14Z"/></svg>
<div style="left:1000px;top:540.5px;width:118px;height:20.5px;background:#f0f0f0"></div>
<svg class="i" viewBox="0 0 24 24" style="left:1002px;top:543.4px;width:14.5px;height:14.5px;color:#222;"><path d="M6.2,2.8A5,5 0 0,1 10.9,5.7H21.8V9.9H17.9V12.6H14.4V9.9H10.9A5,5 0 0,1 6.2,12.8A5,5 0 0,1 1.2,7.8A5,5 0 0,1 6.2,2.8M6.2,6A1.8,1.8 0 0,0 4.4,7.8A1.8,1.8 0 0,0 6.2,9.6A1.8,1.8 0 0,0 8,7.8A1.8,1.8 0 0,0 6.2,6Z"/><path d="M11.2,14.7H9.9A3.5,3.5 0 0,0 9.9,21.7H11.2M12.8,14.7H14.1A3.5,3.5 0 0,1 14.1,21.7H12.8M9.2,18.2H14.8" fill="none" stroke="currentColor" stroke-width="2.1"/></svg>
<div class="t" style="left:1020px;top:541px;height:20px;line-height:20px;"><span style="letter-spacing:-0.127px;font-weight:bold;">TrackId</span></div>
<div class="btn" style="left:1090px;top:540.5px;width:25.5px;height:20.5px;line-height:17.5px"></div>
<svg class="i" viewBox="0 0 24 24" style="left:1096.5px;top:543.8px;width:13px;height:13px;color:#222;"><path d="M7.41,8.58L12,13.17L16.59,8.58L18,10L12,16L6,10L7.41,8.58Z"/></svg>
<div class="inp" style="left:999.7px;top:562.7px;width:92.3px;height:20px;line-height:18px;background:#fff;border-color:transparent;padding-left:2px"></div>
<div class="btn" style="left:1091.5px;top:562px;width:26.5px;height:21px;line-height:18px"></div>
<svg class="i" viewBox="0 0 24 24" style="left:1098.5px;top:566.5px;width:12px;height:12px;color:#111;"><path d="M14,12V19.88C14.04,20.18 13.94,20.5 13.71,20.71C13.32,21.1 12.69,21.1 12.3,20.71L10.29,18.7C10.06,18.47 9.96,18.16 10,17.87V12H9.97L4.21,4.62C3.87,4.19 3.95,3.56 4.38,3.22C4.57,3.08 4.78,3 5,3V3H19V3C19.22,3 19.43,3.08 19.62,3.22C20.05,3.56 20.13,4.19 19.79,4.62L14.03,12H14Z"/></svg>
<div style="left:1119px;top:540.5px;width:130px;height:20.5px;background:#f0f0f0"></div>
<div class="t" style="left:1122px;top:541px;height:20px;line-height:20px;"><span style="letter-spacing:-0.04px;font-weight:bold;">UnitPrice</span></div>
<div class="btn" style="left:1221px;top:540.5px;width:25.5px;height:20.5px;line-height:17.5px"></div>
<svg class="i" viewBox="0 0 24 24" style="left:1227.5px;top:543.8px;width:13px;height:13px;color:#222;"><path d="M7.41,8.58L12,13.17L16.59,8.58L18,10L12,16L6,10L7.41,8.58Z"/></svg>
<div class="inp" style="left:1118.7px;top:562.7px;width:104.3px;height:20px;line-height:18px;background:#fff;border-color:transparent;padding-left:2px"></div>
<div class="btn" style="left:1222.5px;top:562px;width:26.5px;height:21px;line-height:18px"></div>
<svg class="i" viewBox="0 0 24 24" style="left:1229.5px;top:566.5px;width:12px;height:12px;color:#111;"><path d="M14,12V19.88C14.04,20.18 13.94,20.5 13.71,20.71C13.32,21.1 12.69,21.1 12.3,20.71L10.29,18.7C10.06,18.47 9.96,18.16 10,17.87V12H9.97L4.21,4.62C3.87,4.19 3.95,3.56 4.38,3.22C4.57,3.08 4.78,3 5,3V3H19V3C19.22,3 19.43,3.08 19.62,3.22C20.05,3.56 20.13,4.19 19.79,4.62L14.03,12H14Z"/></svg>
<div style="left:1250px;top:540.5px;width:125px;height:20.5px;background:#f0f0f0"></div>
<div class="t" style="left:1253px;top:541px;height:20px;line-height:20px;"><span style="letter-spacing:0.217px;font-weight:bold;">Quantity</span></div>
<div class="btn" style="left:1347px;top:540.5px;width:25.5px;height:20.5px;line-height:17.5px"></div>
<svg class="i" viewBox="0 0 24 24" style="left:1353.5px;top:543.8px;width:13px;height:13px;color:#222;"><path d="M7.41,8.58L12,13.17L16.59,8.58L18,10L12,16L6,10L7.41,8.58Z"/></svg>
<div class="inp" style="left:1249.7px;top:562.7px;width:99.3px;height:20px;line-height:18px;background:#fff;border-color:transparent;padding-left:2px"></div>
<div class="btn" style="left:1348.5px;top:562px;width:26.5px;height:21px;line-height:18px"></div>
<svg class="i" viewBox="0 0 24 24" style="left:1355.5px;top:566.5px;width:12px;height:12px;color:#111;"><path d="M14,12V19.88C14.04,20.18 13.94,20.5 13.71,20.71C13.32,21.1 12.69,21.1 12.3,20.71L10.29,18.7C10.06,18.47 9.96,18.16 10,17.87V12H9.97L4.21,4.62C3.87,4.19 3.95,3.56 4.38,3.22C4.57,3.08 4.78,3 5,3V3H19V3C19.22,3 19.43,3.08 19.62,3.22C20.05,3.56 20.13,4.19 19.79,4.62L14.03,12H14Z"/></svg>
<div style="left:670px;top:540.5px;width:40px;height:20.5px;background:#f0f0f0"></div>
<div style="left:670px;top:562px;width:40px;height:21px;background:#f0f0f0"></div>
<div class="btn" style="left:670px;top:562.5px;width:26px;height:20px;line-height:17px"></div>
<svg class="i" viewBox="0 0 24 24" style="left:677px;top:566.5px;width:12px;height:12px;color:#111;"><path d="M14,12V19.88C14.04,20.18 13.94,20.5 13.71,20.71C13.32,21.1 12.69,21.1 12.3,20.71L10.29,18.7C10.06,18.47 9.96,18.16 10,17.87V12H9.97L4.21,4.62C3.87,4.19 3.95,3.56 4.38,3.22C4.57,3.08 4.78,3 5,3H19C19.22,3 19.43,3.08 19.62,3.22C20.05,3.56 20.13,4.19 19.79,4.62L14.03,12H14M2.4,2.6L3.7,1.3L22,19.7L20.7,21L2.4,2.6Z"/></svg>
<div style="left:670px;top:584px;width:40px;height:21px;background:#f0f0f0"></div>
<div class="t" style="left:673px;top:584px;height:21px;line-height:21px;"><span style="letter-spacing:0.109px;">1</span></div>
<div class="cell" style="left:711px;top:584px;width:158px;height:21px;line-height:21px;background:#42a6fa;color:#fff"><span style="letter-spacing:0.109px;">7</span></div>
<div style="left:861px;top:597px;width:8px;height:8px;background:#1a5fd8"></div>
<div class="cell" style="left:870px;top:584px;width:129px;height:21px;line-height:21px;background:#fff;color:#000"><span style="letter-spacing:0.109px;">3</span><span style="letter-spacing:0.171px;color:#8a8a8a;margin-left:5.5px;">Grétrystraat 63</span></div>
<div style="left:982.5px;top:586px;width:16px;height:17px;background:#ececec"></div>
<svg class="i" viewBox="0 0 24 24" style="left:983px;top:587.2px;width:14.5px;height:14.5px;color:#808080;"><rect x="4.8" y="2.8" width="14.4" height="18.4" rx="1.6" fill="none" stroke="currentColor" stroke-width="1.9"/><path d="M4.8 9.8H19.2M8 13.6H16M8 17.4H16" fill="none" stroke="currentColor" stroke-width="1.6"/></svg>
<div class="cell" style="left:1000px;top:584px;width:118px;height:21px;line-height:21px;background:#fff;color:#000"><span style="letter-spacing:0.109px;">16</span><span style="letter-spacing:-0.088px;color:#8a8a8a;margin-left:5.5px;">Dog Eat Dog</span></div>
<div style="left:1101.5px;top:586px;width:16px;height:17px;background:#ececec"></div>
<svg class="i" viewBox="0 0 24 24" style="left:1102px;top:587.2px;width:14.5px;height:14.5px;color:#808080;"><rect x="4.8" y="2.8" width="14.4" height="18.4" rx="1.6" fill="none" stroke="currentColor" stroke-width="1.9"/><path d="M4.8 9.8H19.2M8 13.6H16M8 17.4H16" fill="none" stroke="currentColor" stroke-width="1.6"/></svg>
<div class="cell" style="left:1119px;top:584px;width:130px;height:21px;line-height:21px;background:#fff;color:#000"><span style="letter-spacing:-0.027px;">0.99</span></div>
<div class="cell" style="left:1250px;top:584px;width:125px;height:21px;line-height:21px;background:#fff;color:#000"><span style="letter-spacing:0.109px;">1</span></div>
<div style="left:670px;top:606px;width:40px;height:21px;background:#f0f0f0"></div>
<div class="t" style="left:673px;top:606px;height:21px;line-height:21px;"><span style="letter-spacing:0.109px;">2</span></div>
<div class="cell" style="left:711px;top:606px;width:158px;height:21px;line-height:21px;background:#fff;color:#000"><span style="letter-spacing:0.109px;">8</span></div>
<div class="cell" style="left:870px;top:606px;width:129px;height:21px;line-height:21px;background:#fff;color:#000"><span style="letter-spacing:0.109px;">3</span><span style="letter-spacing:0.171px;color:#8a8a8a;margin-left:5.5px;">Grétrystraat 63</span></div>
<div style="left:982.5px;top:608px;width:16px;height:17px;background:#ececec"></div>
<svg class="i" viewBox="0 0 24 24" style="left:983px;top:609.2px;width:14.5px;height:14.5px;color:#808080;"><rect x="4.8" y="2.8" width="14.4" height="18.4" rx="1.6" fill="none" stroke="currentColor" stroke-width="1.9"/><path d="M4.8 9.8H19.2M8 13.6H16M8 17.4H16" fill="none" stroke="currentColor" stroke-width="1.6"/></svg>
<div class="cell" style="left:1000px;top:606px;width:118px;height:21px;line-height:21px;background:#fff;color:#000"><span style="letter-spacing:0.109px;">20</span><span style="letter-spacing:0.021px;color:#8a8a8a;margin-left:5.5px;">Overdose</span></div>
<div style="left:1101.5px;top:608px;width:16px;height:17px;background:#ececec"></div>
<svg class="i" viewBox="0 0 24 24" style="left:1102px;top:609.2px;width:14.5px;height:14.5px;color:#808080;"><rect x="4.8" y="2.8" width="14.4" height="18.4" rx="1.6" fill="none" stroke="currentColor" stroke-width="1.9"/><path d="M4.8 9.8H19.2M8 13.6H16M8 17.4H16" fill="none" stroke="currentColor" stroke-width="1.6"/></svg>
<div class="cell" style="left:1119px;top:606px;width:130px;height:21px;line-height:21px;background:#fff;color:#000"><span style="letter-spacing:-0.027px;">0.99</span></div>
<div class="cell" style="left:1250px;top:606px;width:125px;height:21px;line-height:21px;background:#fff;color:#000"><span style="letter-spacing:0.109px;">1</span></div>
<div style="left:670px;top:628px;width:40px;height:21px;background:#f0f0f0"></div>
<div class="t" style="left:673px;top:628px;height:21px;line-height:21px;"><span style="letter-spacing:0.109px;">3</span></div>
<div class="cell" style="left:711px;top:628px;width:158px;height:21px;line-height:21px;background:#f0f0f0;color:#000"><span style="letter-spacing:0.109px;">9</span></div>
<div class="cell" style="left:870px;top:628px;width:129px;height:21px;line-height:21px;background:#f0f0f0;color:#000"><span style="letter-spacing:0.109px;">3</span><span style="letter-spacing:0.171px;color:#8a8a8a;margin-left:5.5px;">Grétrystraat 63</span></div>
<div style="left:982.5px;top:630px;width:16px;height:17px;background:#ececec"></div>
<svg class="i" viewBox="0 0 24 24" style="left:983px;top:631.2px;width:14.5px;height:14.5px;color:#808080;"><rect x="4.8" y="2.8" width="14.4" height="18.4" rx="1.6" fill="none" stroke="currentColor" stroke-width="1.9"/><path d="M4.8 9.8H19.2M8 13.6H16M8 17.4H16" fill="none" stroke="currentColor" stroke-width="1.6"/></svg>
<div class="cell" style="left:1000px;top:628px;width:118px;height:21px;line-height:21px;background:#f0f0f0;color:#000"><span style="letter-spacing:0.109px;">24</span><span style="letter-spacing:-0.057px;color:#8a8a8a;margin-left:5.5px;">Love In An Elevator</span></div>
<div style="left:1101.5px;top:630px;width:16px;height:17px;background:#ececec"></div>
<svg class="i" viewBox="0 0 24 24" style="left:1102px;top:631.2px;width:14.5px;height:14.5px;color:#808080;"><rect x="4.8" y="2.8" width="14.4" height="18.4" rx="1.6" fill="none" stroke="currentColor" stroke-width="1.9"/><path d="M4.8 9.8H19.2M8 13.6H16M8 17.4H16" fill="none" stroke="currentColor" stroke-width="1.6"/></svg>
<div class="cell" style="left:1119px;top:628px;width:130px;height:21px;line-height:21px;background:#f0f0f0;color:#000"><span style="letter-spacing:-0.027px;">0.99</span></div>
<div class="cell" style="left:1250px;top:628px;width:125px;height:21px;line-height:21px;background:#f0f0f0;color:#000"><span style="letter-spacing:0.109px;">1</span></div>
<div style="left:670px;top:650px;width:40px;height:21px;background:#f0f0f0"></div>
<div class="t" style="left:673px;top:650px;height:21px;line-height:21px;"><span style="letter-spacing:0.109px;">4</span></div>
<div class="cell" style="left:711px;top:650px;width:158px;height:21px;line-height:21px;background:#fff;color:#000"><span style="letter-spacing:0.109px;">10</span></div>
<div class="cell" style="left:870px;top:650px;width:129px;height:21px;line-height:21px;background:#fff;color:#000"><span style="letter-spacing:0.109px;">3</span><span style="letter-spacing:0.171px;color:#8a8a8a;margin-left:5.5px;">Grétrystraat 63</span></div>
<div style="left:982.5px;top:652px;width:16px;height:17px;background:#ececec"></div>
<svg class="i" viewBox="0 0 24 24" style="left:983px;top:653.2px;width:14.5px;height:14.5px;color:#808080;"><rect x="4.8" y="2.8" width="14.4" height="18.4" rx="1.6" fill="none" stroke="currentColor" stroke-width="1.9"/><path d="M4.8 9.8H19.2M8 13.6H16M8 17.4H16" fill="none" stroke="currentColor" stroke-width="1.6"/></svg>
<div class="cell" style="left:1000px;top:650px;width:118px;height:21px;line-height:21px;background:#fff;color:#000"><span style="letter-spacing:0.109px;">28</span><span style="letter-spacing:-0.129px;color:#8a8a8a;margin-left:5.5px;">Janie&#x27;s Got A Gun</span></div>
<div style="left:1101.5px;top:652px;width:16px;height:17px;background:#ececec"></div>
<svg class="i" viewBox="0 0 24 24" style="left:1102px;top:653.2px;width:14.5px;height:14.5px;color:#808080;"><rect x="4.8" y="2.8" width="14.4" height="18.4" rx="1.6" fill="none" stroke="currentColor" stroke-width="1.9"/><path d="M4.8 9.8H19.2M8 13.6H16M8 17.4H16" fill="none" stroke="currentColor" stroke-width="1.6"/></svg>
<div class="cell" style="left:1119px;top:650px;width:130px;height:21px;line-height:21px;background:#fff;color:#000"><span style="letter-spacing:-0.027px;">0.99</span></div>
<div class="cell" style="left:1250px;top:650px;width:125px;height:21px;line-height:21px;background:#fff;color:#000"><span style="letter-spacing:0.109px;">1</span></div>
<div style="left:670px;top:672px;width:40px;height:21px;background:#f0f0f0"></div>
<div class="t" style="left:673px;top:672px;height:21px;line-height:21px;"><span style="letter-spacing:0.109px;">5</span></div>
<div class="cell" style="left:711px;top:672px;width:158px;height:21px;line-height:21px;background:#fff;color:#000"><span style="letter-spacing:0.625px;">11</span></div>
<div class="cell" style="left:870px;top:672px;width:129px;height:21px;line-height:21px;background:#fff;color:#000"><span style="letter-spacing:0.109px;">3</span><span style="letter-spacing:0.171px;color:#8a8a8a;margin-left:5.5px;">Grétrystraat 63</span></div>
<div style="left:982.5px;top:674px;width:16px;height:17px;background:#ececec"></div>
<svg class="i" viewBox="0 0 24 24" style="left:983px;top:675.2px;width:14.5px;height:14.5px;color:#808080;"><rect x="4.8" y="2.8" width="14.4" height="18.4" rx="1.6" fill="none" stroke="currentColor" stroke-width="1.9"/><path d="M4.8 9.8H19.2M8 13.6H16M8 17.4H16" fill="none" stroke="currentColor" stroke-width="1.6"/></svg>
<div class="cell" style="left:1000px;top:672px;width:118px;height:21px;line-height:21px;background:#fff;color:#000"><span style="letter-spacing:0.109px;">32</span><span style="letter-spacing:-0.039px;color:#8a8a8a;margin-left:5.5px;">Deuces Are Wild</span></div>
<div style="left:1101.5px;top:674px;width:16px;height:17px;background:#ececec"></div>
<svg class="i" viewBox="0 0 24 24" style="left:1102px;top:675.2px;width:14.5px;height:14.5px;color:#808080;"><rect x="4.8" y="2.8" width="14.4" height="18.4" rx="1.6" fill="none" stroke="currentColor" stroke-width="1.9"/><path d="M4.8 9.8H19.2M8 13.6H16M8 17.4H16" fill="none" stroke="currentColor" stroke-width="1.6"/></svg>
<div class="cell" style="left:1119px;top:672px;width:130px;height:21px;line-height:21px;background:#fff;color:#000"><span style="letter-spacing:-0.027px;">0.99</span></div>
<div class="cell" style="left:1250px;top:672px;width:125px;height:21px;line-height:21px;background:#fff;color:#000"><span style="letter-spacing:0.109px;">1</span></div>
<div style="left:670px;top:694px;width:40px;height:21px;background:#f0f0f0"></div>
<div class="t" style="left:673px;top:694px;height:21px;line-height:21px;"><span style="letter-spacing:0.109px;">6</span></div>
<div class="cell" style="left:711px;top:694px;width:158px;height:21px;line-height:21px;background:#edf2fd;color:#000"><span style="letter-spacing:0.109px;">12</span></div>
<div class="cell" style="left:870px;top:694px;width:129px;height:21px;line-height:21px;background:#edf2fd;color:#000"><span style="letter-spacing:0.109px;">3</span><span style="letter-spacing:0.171px;color:#8a8a8a;margin-left:5.5px;">Grétrystraat 63</span></div>
<div style="left:982.5px;top:696px;width:16px;height:17px;background:#ececec"></div>
<svg class="i" viewBox="0 0 24 24" style="left:983px;top:697.2px;width:14.5px;height:14.5px;color:#808080;"><rect x="4.8" y="2.8" width="14.4" height="18.4" rx="1.6" fill="none" stroke="currentColor" stroke-width="1.9"/><path d="M4.8 9.8H19.2M8 13.6H16M8 17.4H16" fill="none" stroke="currentColor" stroke-width="1.6"/></svg>
<div class="cell" style="left:1000px;top:694px;width:118px;height:21px;line-height:21px;background:#edf2fd;color:#000"><span style="letter-spacing:0.109px;">36</span><span style="letter-spacing:0.147px;color:#8a8a8a;margin-left:5.5px;">Angel</span></div>
<div style="left:1101.5px;top:696px;width:16px;height:17px;background:#ececec"></div>
<svg class="i" viewBox="0 0 24 24" style="left:1102px;top:697.2px;width:14.5px;height:14.5px;color:#808080;"><rect x="4.8" y="2.8" width="14.4" height="18.4" rx="1.6" fill="none" stroke="currentColor" stroke-width="1.9"/><path d="M4.8 9.8H19.2M8 13.6H16M8 17.4H16" fill="none" stroke="currentColor" stroke-width="1.6"/></svg>
<div class="cell" style="left:1119px;top:694px;width:130px;height:21px;line-height:21px;background:#edf2fd;color:#000"><span style="letter-spacing:-0.027px;">0.99</span></div>
<div class="cell" style="left:1250px;top:694px;width:125px;height:21px;line-height:21px;background:#edf2fd;color:#000"><span style="letter-spacing:0.109px;">1</span></div>
<div style="left:669px;top:540px;width:1px;height:176px;background:#c8c8c8"></div>
<div style="left:710px;top:540px;width:1px;height:176px;background:#c8c8c8"></div>
<div style="left:869px;top:540px;width:1px;height:176px;background:#c8c8c8"></div>
<div style="left:999px;top:540px;width:1px;height:176px;background:#c8c8c8"></div>
<div style="left:1118px;top:540px;width:1px;height:176px;background:#c8c8c8"></div>
<div style="left:1249px;top:540px;width:1px;height:176px;background:#c8c8c8"></div>
<div style="left:1375px;top:540px;width:1px;height:176px;background:#c8c8c8"></div>
<div class="t" style="left:1321px;top:821px;height:16px;line-height:16px;background:#ffffb8;width:49px;text-align:center"><span style="letter-spacing:-0.317px;">Rows: 6</span></div>
<div style="left:1399px;top:540px;width:11px;height:319px;background:#dcdcdc"></div>
<div style="left:669px;top:846px;width:741px;height:11px;background:#dcdcdc"></div>
<div style="left:1399px;top:841px;width:11px;height:5px;background:#aaa"></div>
<div style="left:1399px;top:846px;width:11px;height:11px;background:#c8c8c8"></div>
<div style="left:0px;top:857px;width:1414px;height:23px;background:#1a00c8"></div>
<svg class="i" viewBox="0 0 24 24" style="left:13px;top:860.2px;width:13.5px;height:13.5px;color:#fff;"><path d="M12,3C7.58,3 4,4.79 4,7C4,9.21 7.58,11 12,11C16.42,11 20,9.21 20,7C20,4.79 16.42,3 12,3M4,9V12C4,14.21 7.58,16 12,16C16.42,16 20,14.21 20,12V9C20,11.21 16.42,13 12,13C7.58,13 4,11.21 4,9M4,14V17C4,19.21 7.58,21 12,21C16.42,21 20,19.21 20,17V14C20,16.21 16.42,18 12,18C7.58,18 4,16.21 4,14Z"/></svg><div class="t" style="left:30.5px;top:857px;height:20px;line-height:20px;color:#fff"><span style="letter-spacing:0.007px;">Chinook</span></div>
<svg class="i" viewBox="0 0 24 24" style="left:102px;top:860.2px;width:13.5px;height:13.5px;color:#fff;"><path d="M4,1H20A1,1 0 0,1 21,2V6A1,1 0 0,1 20,7H4A1,1 0 0,1 3,6V2A1,1 0 0,1 4,1M4,9H20A1,1 0 0,1 21,10V14A1,1 0 0,1 20,15H4A1,1 0 0,1 3,14V10A1,1 0 0,1 4,9M4,17H20A1,1 0 0,1 21,18V22A1,1 0 0,1 20,23H4A1,1 0 0,1 3,22V18A1,1 0 0,1 4,17M9,5H10V3H9V5M9,13H10V11H9V13M9,21H10V19H9V21M5,3V5H7V3H5M5,11V13H7V11H5M5,19V21H7V19H5Z"/></svg><div class="t" style="left:119.5px;top:857px;height:20px;line-height:20px;color:#fff"><span style="letter-spacing:-0.311px;">MySQL Local</span></div>
<svg class="i" viewBox="0 0 24 24" style="left:221px;top:860.2px;width:13.5px;height:13.5px;color:#fff;"><path d="M12,4A4,4 0 0,1 16,8A4,4 0 0,1 12,12A4,4 0 0,1 8,8A4,4 0 0,1 12,4M12,14C16.42,14 20,15.79 20,18V20H4V18C4,15.79 7.58,14 12,14Z"/></svg><div class="t" style="left:238.5px;top:857px;height:20px;line-height:20px;color:#fff"><span style="letter-spacing:0.766px;">root</span></div>
<div style="left:287.5px;top:861.5px;width:11px;height:11px;background:#fff;border-radius:50%"></div>
<svg class="i" viewBox="0 0 24 24" style="left:286px;top:860.2px;width:13.5px;height:13.5px;color:#2aa52e;"><path d="M12 2C6.5 2 2 6.5 2 12S6.5 22 12 22 22 17.5 22 12 17.5 2 12 2M10 17L5 12L6.41 10.59L10 14.17L17.59 6.58L19 8L10 17Z"/></svg><div class="t" style="left:303.5px;top:857px;height:20px;line-height:20px;color:#fff"><span style="letter-spacing:0.075px;">Connected</span></div>
</div></body></html>
